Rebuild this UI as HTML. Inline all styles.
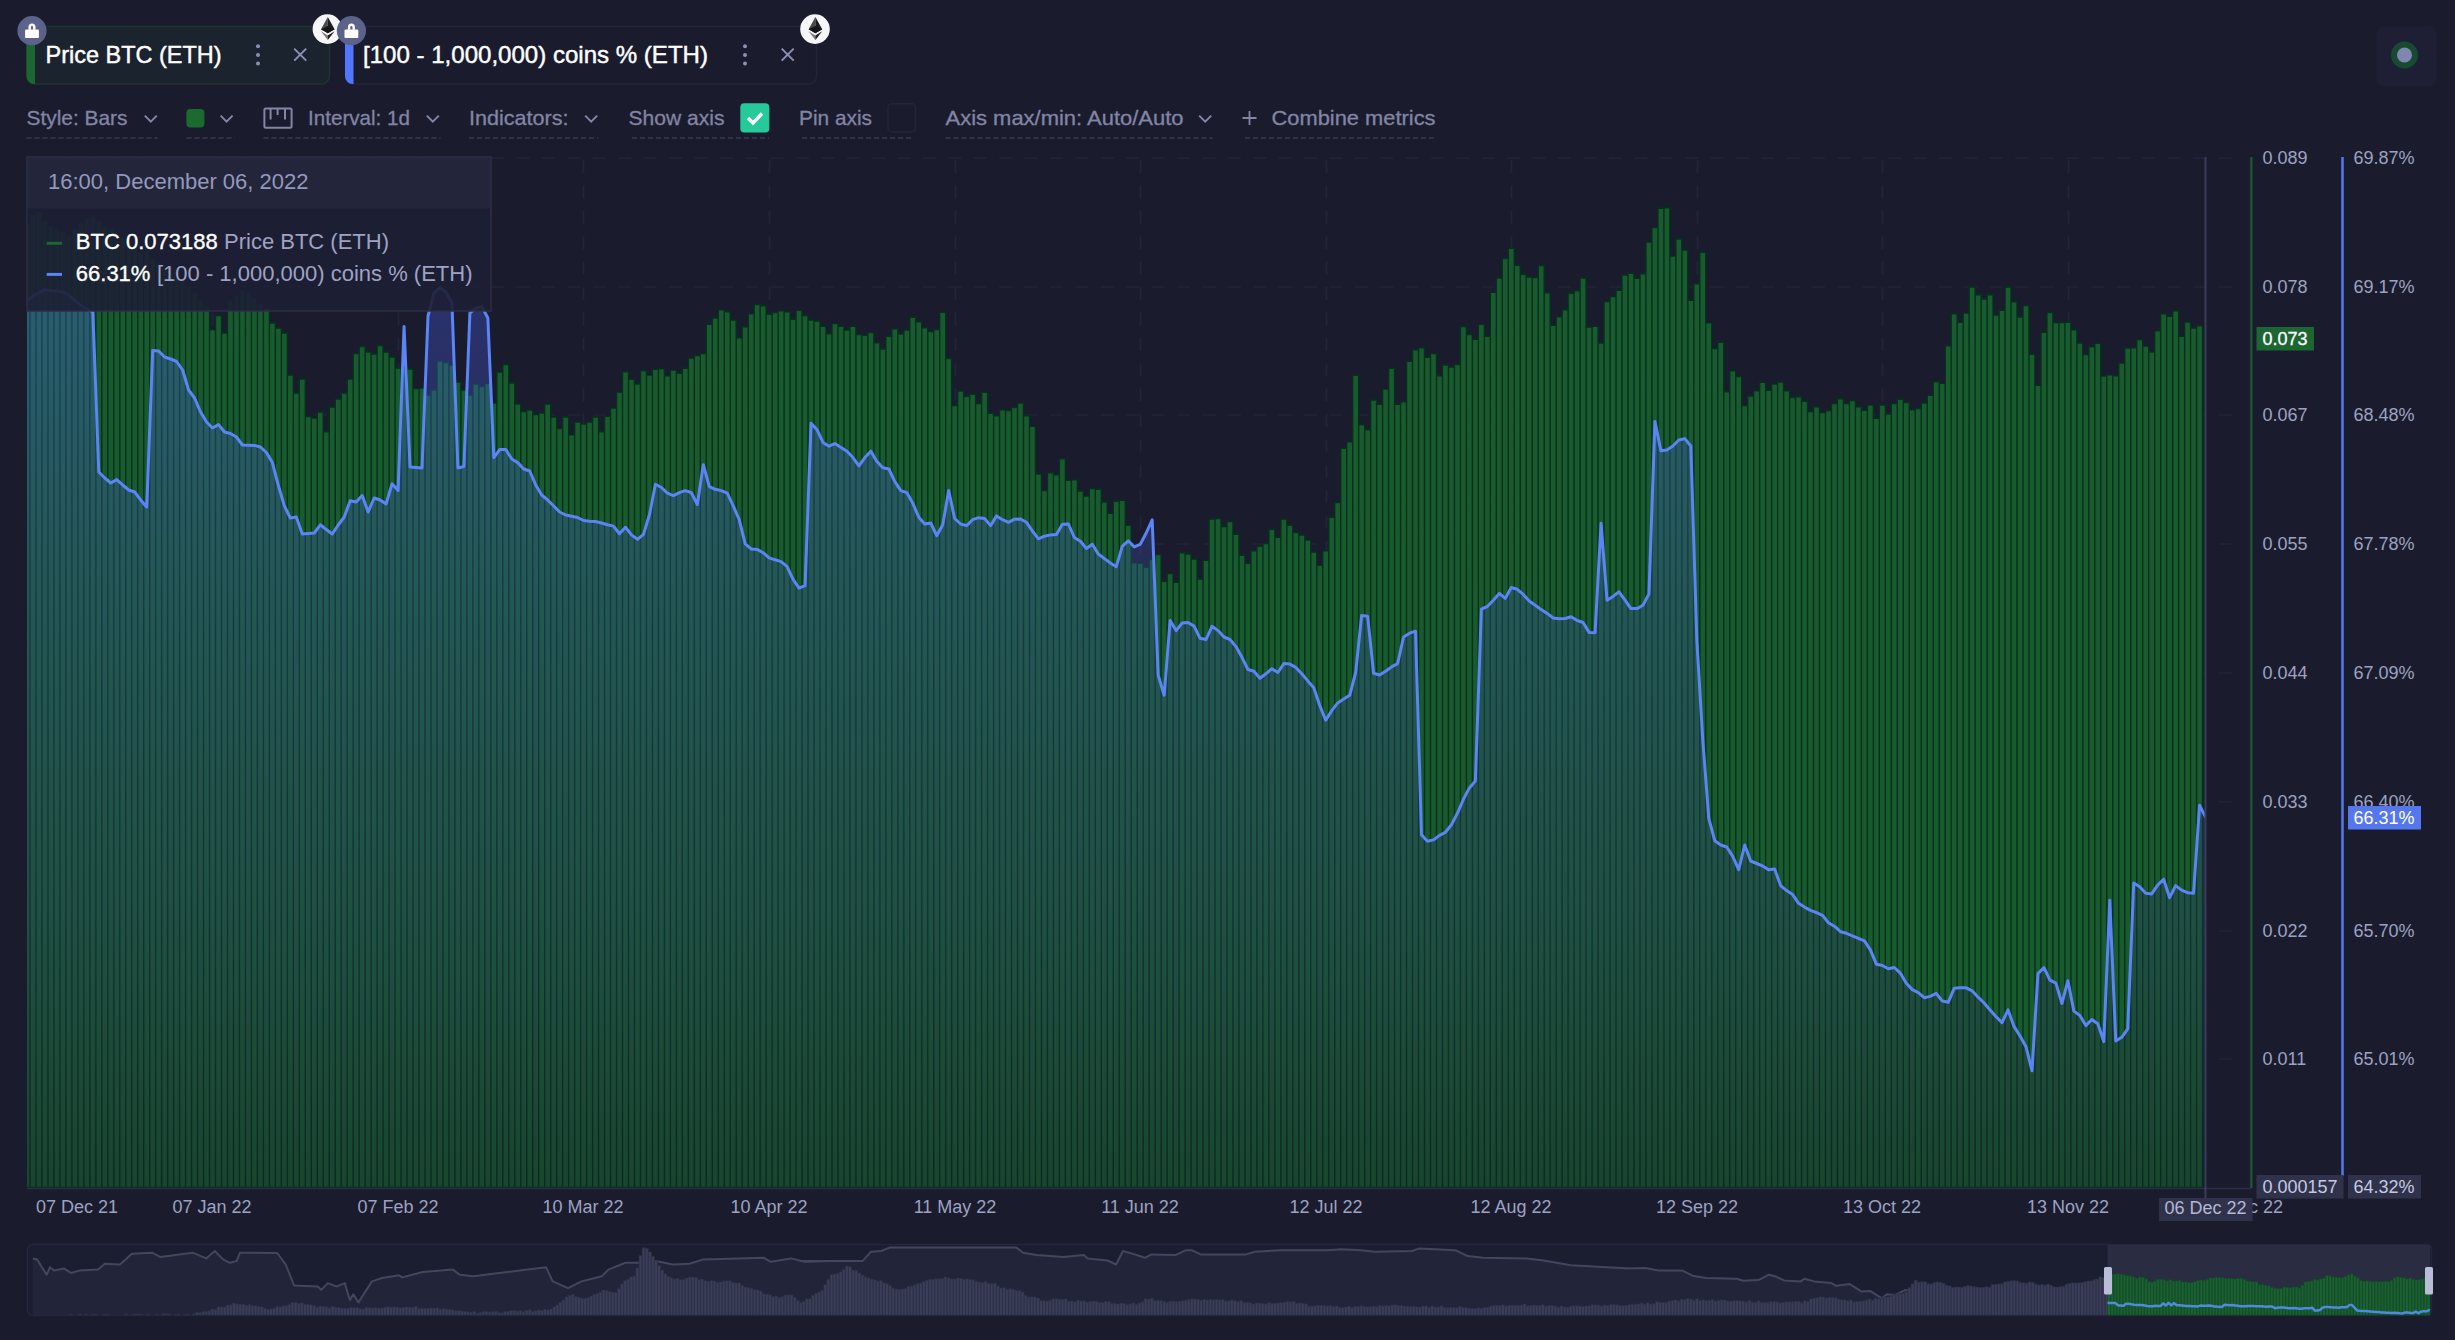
<!DOCTYPE html><html><head><meta charset="utf-8"><title>Chart</title>
<style>html,body{margin:0;padding:0;background:#1a1c2e;}body{width:2455px;height:1340px;overflow:hidden;}svg{display:block;font-family:"Liberation Sans",sans-serif;}</style></head><body>
<svg width="2455" height="1340" viewBox="0 0 2455 1340">
<defs>
<linearGradient id="ag" gradientUnits="userSpaceOnUse" x1="0" y1="287" x2="0" y2="1187"><stop offset="0" stop-color="rgb(80,100,255)" stop-opacity="0.30"/><stop offset="0.35" stop-color="rgb(58,80,160)" stop-opacity="0.32"/><stop offset="0.69" stop-color="rgb(44,58,105)" stop-opacity="0.33"/><stop offset="1" stop-color="rgb(26,28,46)" stop-opacity="0.34"/></linearGradient>
<clipPath id="cc"><rect x="27" y="150" width="2178.5" height="1038"/></clipPath>
</defs>
<rect width="2455" height="1340" fill="#1a1c2e"/>
<line x1="27" y1="158" x2="2240" y2="158" stroke="#22253a" stroke-width="1.6" stroke-dasharray="13 12.4" stroke-dashoffset="-7"/>
<line x1="27" y1="287" x2="2240" y2="287" stroke="#22253a" stroke-width="1.6" stroke-dasharray="13 12.4" stroke-dashoffset="-7"/>
<line x1="27" y1="415" x2="2240" y2="415" stroke="#22253a" stroke-width="1.6" stroke-dasharray="13 12.4" stroke-dashoffset="-7"/>
<line x1="27" y1="544" x2="2240" y2="544" stroke="#22253a" stroke-width="1.6" stroke-dasharray="13 12.4" stroke-dashoffset="-7"/>
<line x1="27" y1="673" x2="2240" y2="673" stroke="#22253a" stroke-width="1.6" stroke-dasharray="13 12.4" stroke-dashoffset="-7"/>
<line x1="27" y1="802" x2="2240" y2="802" stroke="#22253a" stroke-width="1.6" stroke-dasharray="13 12.4" stroke-dashoffset="-7"/>
<line x1="27" y1="931" x2="2240" y2="931" stroke="#22253a" stroke-width="1.6" stroke-dasharray="13 12.4" stroke-dashoffset="-7"/>
<line x1="27" y1="1059" x2="2240" y2="1059" stroke="#22253a" stroke-width="1.6" stroke-dasharray="13 12.4" stroke-dashoffset="-7"/>
<line x1="212.5" y1="157" x2="212.5" y2="1187" stroke="#22253a" stroke-width="1.6" stroke-dasharray="13 12.4" stroke-dashoffset="-3"/>
<line x1="398.5" y1="157" x2="398.5" y2="1187" stroke="#22253a" stroke-width="1.6" stroke-dasharray="13 12.4" stroke-dashoffset="-3"/>
<line x1="583.5" y1="157" x2="583.5" y2="1187" stroke="#22253a" stroke-width="1.6" stroke-dasharray="13 12.4" stroke-dashoffset="-3"/>
<line x1="769.5" y1="157" x2="769.5" y2="1187" stroke="#22253a" stroke-width="1.6" stroke-dasharray="13 12.4" stroke-dashoffset="-3"/>
<line x1="955.5" y1="157" x2="955.5" y2="1187" stroke="#22253a" stroke-width="1.6" stroke-dasharray="13 12.4" stroke-dashoffset="-3"/>
<line x1="1140.5" y1="157" x2="1140.5" y2="1187" stroke="#22253a" stroke-width="1.6" stroke-dasharray="13 12.4" stroke-dashoffset="-3"/>
<line x1="1326.5" y1="157" x2="1326.5" y2="1187" stroke="#22253a" stroke-width="1.6" stroke-dasharray="13 12.4" stroke-dashoffset="-3"/>
<line x1="1511.5" y1="157" x2="1511.5" y2="1187" stroke="#22253a" stroke-width="1.6" stroke-dasharray="13 12.4" stroke-dashoffset="-3"/>
<line x1="1697.5" y1="157" x2="1697.5" y2="1187" stroke="#22253a" stroke-width="1.6" stroke-dasharray="13 12.4" stroke-dashoffset="-3"/>
<line x1="1882.5" y1="157" x2="1882.5" y2="1187" stroke="#22253a" stroke-width="1.6" stroke-dasharray="13 12.4" stroke-dashoffset="-3"/>
<line x1="2068.5" y1="157" x2="2068.5" y2="1187" stroke="#22253a" stroke-width="1.6" stroke-dasharray="13 12.4" stroke-dashoffset="-3"/>
<g clip-path="url(#cc)">
<path d="M24.01 1187.5V222.0H29.99V1187.5ZM29.99 1187.5V214.0H35.98V1187.5ZM35.98 1187.5V212.0H41.96V1187.5ZM41.96 1187.5V220.0H47.95V1187.5ZM47.95 1187.5V226.0H53.93V1187.5ZM53.93 1187.5V228.0H59.92V1187.5ZM59.92 1187.5V232.0H65.90V1187.5ZM65.90 1187.5V236.0H71.89V1187.5ZM71.89 1187.5V228.0H77.87V1187.5ZM77.87 1187.5V222.0H83.86V1187.5ZM83.86 1187.5V218.0H89.84V1187.5ZM89.84 1187.5V216.0H95.83V1187.5ZM95.83 1187.5V220.0H101.81V1187.5ZM101.81 1187.5V226.0H107.80V1187.5ZM107.80 1187.5V228.0H113.78V1187.5ZM113.78 1187.5V232.0H119.77V1187.5ZM119.77 1187.5V238.0H125.75V1187.5ZM125.75 1187.5V240.0H131.74V1187.5ZM131.74 1187.5V246.0H137.72V1187.5ZM137.72 1187.5V252.0H143.71V1187.5ZM143.71 1187.5V250.0H149.69V1187.5ZM149.69 1187.5V258.0H155.68V1187.5ZM155.68 1187.5V262.0H161.66V1187.5ZM161.66 1187.5V268.0H167.65V1187.5ZM167.65 1187.5V266.0H173.63V1187.5ZM173.63 1187.5V272.0H179.62V1187.5ZM179.62 1187.5V280.0H185.60V1187.5ZM185.60 1187.5V286.0H191.59V1187.5ZM191.59 1187.5V292.0H197.57V1187.5ZM197.57 1187.5V300.0H203.56V1187.5ZM203.56 1187.5V306.0H209.54V1187.5ZM209.54 1187.5V329.5H215.53V1187.5ZM215.53 1187.5V315.5H221.51V1187.5ZM221.51 1187.5V333.0H227.50V1187.5ZM227.50 1187.5V300.0H233.48V1187.5ZM233.48 1187.5V295.0H239.47V1187.5ZM239.47 1187.5V290.0H245.45V1187.5ZM245.45 1187.5V292.0H251.44V1187.5ZM251.44 1187.5V298.0H257.42V1187.5ZM257.42 1187.5V303.0H263.41V1187.5ZM263.41 1187.5V308.0H269.39V1187.5ZM269.39 1187.5V323.0H275.38V1187.5ZM275.38 1187.5V328.0H281.36V1187.5ZM281.36 1187.5V333.0H287.35V1187.5ZM287.35 1187.5V375.0H293.33V1187.5ZM293.33 1187.5V393.0H299.32V1187.5ZM299.32 1187.5V379.0H305.30V1187.5ZM305.30 1187.5V416.5H311.29V1187.5ZM311.29 1187.5V418.0H317.27V1187.5ZM317.27 1187.5V412.0H323.26V1187.5ZM323.26 1187.5V431.7H329.24V1187.5ZM329.24 1187.5V407.0H335.23V1187.5ZM335.23 1187.5V399.0H341.21V1187.5ZM341.21 1187.5V393.0H347.20V1187.5ZM347.20 1187.5V379.0H353.18V1187.5ZM353.18 1187.5V353.6H359.17V1187.5ZM359.17 1187.5V346.5H365.15V1187.5ZM365.15 1187.5V352.0H371.14V1187.5ZM371.14 1187.5V354.0H377.12V1187.5ZM377.12 1187.5V345.5H383.11V1187.5ZM383.11 1187.5V352.0H389.09V1187.5ZM389.09 1187.5V357.0H395.08V1187.5ZM395.08 1187.5V368.0H401.06V1187.5ZM401.06 1187.5V369.0H407.05V1187.5ZM407.05 1187.5V369.0H413.03V1187.5ZM413.03 1187.5V388.6H419.02V1187.5ZM419.02 1187.5V388.0H425.00V1187.5ZM425.00 1187.5V395.0H430.99V1187.5ZM430.99 1187.5V390.0H436.97V1187.5ZM436.97 1187.5V361.0H442.96V1187.5ZM442.96 1187.5V362.5H448.94V1187.5ZM448.94 1187.5V365.0H454.93V1187.5ZM454.93 1187.5V382.0H460.91V1187.5ZM460.91 1187.5V390.0H466.90V1187.5ZM466.90 1187.5V395.0H472.88V1187.5ZM472.88 1187.5V384.0H478.87V1187.5ZM478.87 1187.5V386.5H484.85V1187.5ZM484.85 1187.5V383.5H490.84V1187.5ZM490.84 1187.5V403.0H496.82V1187.5ZM496.82 1187.5V372.0H502.81V1187.5ZM502.81 1187.5V364.5H508.79V1187.5ZM508.79 1187.5V383.0H514.78V1187.5ZM514.78 1187.5V404.0H520.76V1187.5ZM520.76 1187.5V411.5H526.75V1187.5ZM526.75 1187.5V410.0H532.73V1187.5ZM532.73 1187.5V414.5H538.72V1187.5ZM538.72 1187.5V413.0H544.70V1187.5ZM544.70 1187.5V404.0H550.69V1187.5ZM550.69 1187.5V417.0H556.67V1187.5ZM556.67 1187.5V428.5H562.66V1187.5ZM562.66 1187.5V417.0H568.64V1187.5ZM568.64 1187.5V434.7H574.63V1187.5ZM574.63 1187.5V422.0H580.61V1187.5ZM580.61 1187.5V424.0H586.60V1187.5ZM586.60 1187.5V422.0H592.58V1187.5ZM592.58 1187.5V417.0H598.57V1187.5ZM598.57 1187.5V431.7H604.55V1187.5ZM604.55 1187.5V416.2H610.54V1187.5ZM610.54 1187.5V408.1H616.52V1187.5ZM616.52 1187.5V392.1H622.51V1187.5ZM622.51 1187.5V371.8H628.49V1187.5ZM628.49 1187.5V379.4H634.48V1187.5ZM634.48 1187.5V384.0H640.46V1187.5ZM640.46 1187.5V370.8H646.45V1187.5ZM646.45 1187.5V375.1H652.43V1187.5ZM652.43 1187.5V369.3H658.42V1187.5ZM658.42 1187.5V368.8H664.40V1187.5ZM664.40 1187.5V375.9H670.39V1187.5ZM670.39 1187.5V370.1H676.37V1187.5ZM676.37 1187.5V373.4H682.36V1187.5ZM682.36 1187.5V368.3H688.34V1187.5ZM688.34 1187.5V358.1H694.33V1187.5ZM694.33 1187.5V355.6H700.31V1187.5ZM700.31 1187.5V353.6H706.30V1187.5ZM706.30 1187.5V324.4H712.28V1187.5ZM712.28 1187.5V318.1H718.27V1187.5ZM718.27 1187.5V309.9H724.25V1187.5ZM724.25 1187.5V311.7H730.24V1187.5ZM730.24 1187.5V320.1H736.22V1187.5ZM736.22 1187.5V337.8H742.21V1187.5ZM742.21 1187.5V326.9H748.19V1187.5ZM748.19 1187.5V313.7H754.18V1187.5ZM754.18 1187.5V304.6H760.16V1187.5ZM760.16 1187.5V305.9H766.15V1187.5ZM766.15 1187.5V314.2H772.13V1187.5ZM772.13 1187.5V312.5H778.12V1187.5ZM778.12 1187.5V310.9H784.10V1187.5ZM784.10 1187.5V311.7H790.09V1187.5ZM790.09 1187.5V319.3H796.07V1187.5ZM796.07 1187.5V310.4H802.06V1187.5ZM802.06 1187.5V315.5H808.04V1187.5ZM808.04 1187.5V320.1H814.03V1187.5ZM814.03 1187.5V321.1H820.01V1187.5ZM820.01 1187.5V326.4H826.00V1187.5ZM826.00 1187.5V333.8H831.98V1187.5ZM831.98 1187.5V323.6H837.97V1187.5ZM837.97 1187.5V326.4H843.95V1187.5ZM843.95 1187.5V330.0H849.94V1187.5ZM849.94 1187.5V326.4H855.92V1187.5ZM855.92 1187.5V334.5H861.91V1187.5ZM861.91 1187.5V335.3H867.89V1187.5ZM867.89 1187.5V332.5H873.88V1187.5ZM873.88 1187.5V342.9H879.86V1187.5ZM879.86 1187.5V349.0H885.85V1187.5ZM885.85 1187.5V336.3H891.83V1187.5ZM891.83 1187.5V328.7H897.82V1187.5ZM897.82 1187.5V334.0H903.80V1187.5ZM903.80 1187.5V330.0H909.79V1187.5ZM909.79 1187.5V317.3H915.77V1187.5ZM915.77 1187.5V321.9H921.76V1187.5ZM921.76 1187.5V327.7H927.74V1187.5ZM927.74 1187.5V331.5H933.73V1187.5ZM933.73 1187.5V329.5H939.71V1187.5ZM939.71 1187.5V312.2H945.70V1187.5ZM945.70 1187.5V358.6H951.68V1187.5ZM951.68 1187.5V405.6H957.67V1187.5ZM957.67 1187.5V391.1H963.65V1187.5ZM963.65 1187.5V396.2H969.64V1187.5ZM969.64 1187.5V394.2H975.62V1187.5ZM975.62 1187.5V403.5H981.61V1187.5ZM981.61 1187.5V392.4H987.59V1187.5ZM987.59 1187.5V413.2H993.58V1187.5ZM993.58 1187.5V415.7H999.56V1187.5ZM999.56 1187.5V409.9H1005.55V1187.5ZM1005.55 1187.5V410.6H1011.53V1187.5ZM1011.53 1187.5V407.6H1017.52V1187.5ZM1017.52 1187.5V403.0H1023.50V1187.5ZM1023.50 1187.5V415.7H1029.49V1187.5ZM1029.49 1187.5V426.4H1035.47V1187.5ZM1035.47 1187.5V474.1H1041.46V1187.5ZM1041.46 1187.5V490.6H1047.44V1187.5ZM1047.44 1187.5V472.8H1053.43V1187.5ZM1053.43 1187.5V474.8H1059.41V1187.5ZM1059.41 1187.5V458.8H1065.40V1187.5ZM1065.40 1187.5V480.4H1071.38V1187.5ZM1071.38 1187.5V479.9H1077.37V1187.5ZM1077.37 1187.5V491.1H1083.35V1187.5ZM1083.35 1187.5V496.1H1089.34V1187.5ZM1089.34 1187.5V488.5H1095.32V1187.5ZM1095.32 1187.5V489.3H1101.31V1187.5ZM1101.31 1187.5V502.0H1107.29V1187.5ZM1107.29 1187.5V513.4H1113.28V1187.5ZM1113.28 1187.5V501.2H1119.26V1187.5ZM1119.26 1187.5V500.2H1125.25V1187.5ZM1125.25 1187.5V525.3H1131.23V1187.5ZM1131.23 1187.5V562.9H1137.22V1187.5ZM1137.22 1187.5V563.4H1143.20V1187.5ZM1143.20 1187.5V567.2H1149.19V1187.5ZM1149.19 1187.5V559.6H1155.17V1187.5ZM1155.17 1187.5V554.5H1161.16V1187.5ZM1161.16 1187.5V581.2H1167.14V1187.5ZM1167.14 1187.5V573.6H1173.13V1187.5ZM1173.13 1187.5V582.4H1179.11V1187.5ZM1179.11 1187.5V552.8H1185.10V1187.5ZM1185.10 1187.5V554.0H1191.08V1187.5ZM1191.08 1187.5V559.1H1197.07V1187.5ZM1197.07 1187.5V579.1H1203.05V1187.5ZM1203.05 1187.5V560.4H1209.04V1187.5ZM1209.04 1187.5V519.0H1215.02V1187.5ZM1215.02 1187.5V518.5H1221.01V1187.5ZM1221.01 1187.5V526.6H1226.99V1187.5ZM1226.99 1187.5V521.6H1232.98V1187.5ZM1232.98 1187.5V534.2H1238.96V1187.5ZM1238.96 1187.5V555.3H1244.95V1187.5ZM1244.95 1187.5V563.4H1250.93V1187.5ZM1250.93 1187.5V550.7H1256.92V1187.5ZM1256.92 1187.5V546.2H1262.90V1187.5ZM1262.90 1187.5V543.6H1268.89V1187.5ZM1268.89 1187.5V529.2H1274.87V1187.5ZM1274.87 1187.5V537.3H1280.86V1187.5ZM1280.86 1187.5V519.0H1286.84V1187.5ZM1286.84 1187.5V525.4H1292.83V1187.5ZM1292.83 1187.5V532.5H1298.81V1187.5ZM1298.81 1187.5V535.0H1304.80V1187.5ZM1304.80 1187.5V540.1H1310.78V1187.5ZM1310.78 1187.5V552.0H1316.77V1187.5ZM1316.77 1187.5V565.4H1322.75V1187.5ZM1322.75 1187.5V550.7H1328.74V1187.5ZM1328.74 1187.5V517.2H1334.72V1187.5ZM1334.72 1187.5V502.5H1340.71V1187.5ZM1340.71 1187.5V448.2H1346.69V1187.5ZM1346.69 1187.5V441.9H1352.68V1187.5ZM1352.68 1187.5V375.2H1358.66V1187.5ZM1358.66 1187.5V424.7H1364.65V1187.5ZM1364.65 1187.5V429.7H1370.63V1187.5ZM1370.63 1187.5V400.0H1376.62V1187.5ZM1376.62 1187.5V404.4H1382.60V1187.5ZM1382.60 1187.5V389.1H1388.59V1187.5ZM1388.59 1187.5V368.3H1394.57V1187.5ZM1394.57 1187.5V404.4H1400.56V1187.5ZM1400.56 1187.5V401.8H1406.54V1187.5ZM1406.54 1187.5V361.2H1412.53V1187.5ZM1412.53 1187.5V349.8H1418.51V1187.5ZM1418.51 1187.5V347.8H1424.50V1187.5ZM1424.50 1187.5V357.4H1430.48V1187.5ZM1430.48 1187.5V353.6H1436.47V1187.5ZM1436.47 1187.5V375.7H1442.45V1187.5ZM1442.45 1187.5V365.0H1448.44V1187.5ZM1448.44 1187.5V367.1H1454.42V1187.5ZM1454.42 1187.5V364.5H1460.41V1187.5ZM1460.41 1187.5V326.5H1466.39V1187.5ZM1466.39 1187.5V334.6H1472.38V1187.5ZM1472.38 1187.5V339.2H1478.36V1187.5ZM1478.36 1187.5V324.4H1484.35V1187.5ZM1484.35 1187.5V336.4H1490.33V1187.5ZM1490.33 1187.5V292.2H1496.32V1187.5ZM1496.32 1187.5V278.0H1502.30V1187.5ZM1502.30 1187.5V258.5H1508.29V1187.5ZM1508.29 1187.5V248.3H1514.27V1187.5ZM1514.27 1187.5V265.3H1520.26V1187.5ZM1520.26 1187.5V274.2H1526.24V1187.5ZM1526.24 1187.5V277.0H1532.23V1187.5ZM1532.23 1187.5V277.5H1538.21V1187.5ZM1538.21 1187.5V265.6H1544.20V1187.5ZM1544.20 1187.5V292.7H1550.18V1187.5ZM1550.18 1187.5V325.2H1556.17V1187.5ZM1556.17 1187.5V316.8H1562.15V1187.5ZM1562.15 1187.5V309.7H1568.14V1187.5ZM1568.14 1187.5V293.2H1574.12V1187.5ZM1574.12 1187.5V290.7H1580.11V1187.5ZM1580.11 1187.5V278.0H1586.09V1187.5ZM1586.09 1187.5V327.0H1592.08V1187.5ZM1592.08 1187.5V326.2H1598.06V1187.5ZM1598.06 1187.5V343.0H1604.05V1187.5ZM1604.05 1187.5V301.6H1610.03V1187.5ZM1610.03 1187.5V296.5H1616.02V1187.5ZM1616.02 1187.5V290.2H1622.00V1187.5ZM1622.00 1187.5V275.0H1627.99V1187.5ZM1627.99 1187.5V273.2H1633.97V1187.5ZM1633.97 1187.5V278.3H1639.96V1187.5ZM1639.96 1187.5V273.7H1645.94V1187.5ZM1645.94 1187.5V242.0H1651.93V1187.5ZM1651.93 1187.5V227.5H1657.91V1187.5ZM1657.91 1187.5V208.3H1663.90V1187.5ZM1663.90 1187.5V207.8H1669.88V1187.5ZM1669.88 1187.5V256.0H1675.87V1187.5ZM1675.87 1187.5V239.0H1681.85V1187.5ZM1681.85 1187.5V250.1H1687.84V1187.5ZM1687.84 1187.5V300.4H1693.82V1187.5ZM1693.82 1187.5V283.9H1699.81V1187.5ZM1699.81 1187.5V252.2H1705.79V1187.5ZM1705.79 1187.5V322.7H1711.78V1187.5ZM1711.78 1187.5V348.5H1717.76V1187.5ZM1717.76 1187.5V342.2H1723.75V1187.5ZM1723.75 1187.5V391.7H1729.73V1187.5ZM1729.73 1187.5V370.9H1735.72V1187.5ZM1735.72 1187.5V376.5H1741.70V1187.5ZM1741.70 1187.5V405.6H1747.69V1187.5ZM1747.69 1187.5V396.0H1753.67V1187.5ZM1753.67 1187.5V390.9H1759.66V1187.5ZM1759.66 1187.5V382.3H1765.64V1187.5ZM1765.64 1187.5V390.4H1771.63V1187.5ZM1771.63 1187.5V384.1H1777.61V1187.5ZM1777.61 1187.5V382.0H1783.60V1187.5ZM1783.60 1187.5V390.9H1789.58V1187.5ZM1789.58 1187.5V397.5H1795.57V1187.5ZM1795.57 1187.5V396.7H1801.55V1187.5ZM1801.55 1187.5V401.3H1807.54V1187.5ZM1807.54 1187.5V411.5H1813.52V1187.5ZM1813.52 1187.5V406.9H1819.51V1187.5ZM1819.51 1187.5V412.5H1825.49V1187.5ZM1825.49 1187.5V410.7H1831.48V1187.5ZM1831.48 1187.5V403.6H1837.46V1187.5ZM1837.46 1187.5V398.8H1843.45V1187.5ZM1843.45 1187.5V403.6H1849.43V1187.5ZM1849.43 1187.5V400.6H1855.42V1187.5ZM1855.42 1187.5V406.9H1861.40V1187.5ZM1861.40 1187.5V410.2H1867.39V1187.5ZM1867.39 1187.5V405.1H1873.37V1187.5ZM1873.37 1187.5V418.3H1879.36V1187.5ZM1879.36 1187.5V405.1H1885.34V1187.5ZM1885.34 1187.5V414.0H1891.33V1187.5ZM1891.33 1187.5V403.6H1897.31V1187.5ZM1897.31 1187.5V399.3H1903.30V1187.5ZM1903.30 1187.5V402.6H1909.28V1187.5ZM1909.28 1187.5V409.8H1915.27V1187.5ZM1915.27 1187.5V408.5H1921.25V1187.5ZM1921.25 1187.5V403.0H1927.24V1187.5ZM1927.24 1187.5V395.4H1933.22V1187.5ZM1933.22 1187.5V381.7H1939.21V1187.5ZM1939.21 1187.5V383.4H1945.19V1187.5ZM1945.19 1187.5V345.8H1951.18V1187.5ZM1951.18 1187.5V313.8H1957.16V1187.5ZM1957.16 1187.5V322.2H1963.15V1187.5ZM1963.15 1187.5V313.1H1969.13V1187.5ZM1969.13 1187.5V287.0H1975.12V1187.5ZM1975.12 1187.5V294.8H1981.10V1187.5ZM1981.10 1187.5V299.0H1987.09V1187.5ZM1987.09 1187.5V294.8H1993.07V1187.5ZM1993.07 1187.5V315.1H1999.06V1187.5ZM1999.06 1187.5V310.2H2005.04V1187.5ZM2005.04 1187.5V287.0H2011.03V1187.5ZM2011.03 1187.5V301.7H2017.01V1187.5ZM2017.01 1187.5V317.0H2023.00V1187.5ZM2023.00 1187.5V305.5H2028.98V1187.5ZM2028.98 1187.5V354.2H2034.97V1187.5ZM2034.97 1187.5V385.2H2040.95V1187.5ZM2040.95 1187.5V332.4H2046.94V1187.5ZM2046.94 1187.5V312.5H2052.92V1187.5ZM2052.92 1187.5V322.5H2058.91V1187.5ZM2058.91 1187.5V322.5H2064.89V1187.5ZM2064.89 1187.5V322.2H2070.88V1187.5ZM2070.88 1187.5V329.7H2076.86V1187.5ZM2076.86 1187.5V343.1H2082.85V1187.5ZM2082.85 1187.5V354.6H2088.83V1187.5ZM2088.83 1187.5V346.8H2094.82V1187.5ZM2094.82 1187.5V343.4H2100.80V1187.5ZM2100.80 1187.5V376.1H2106.79V1187.5ZM2106.79 1187.5V374.9H2112.77V1187.5ZM2112.77 1187.5V375.8H2118.76V1187.5ZM2118.76 1187.5V363.0H2124.74V1187.5ZM2124.74 1187.5V348.1H2130.73V1187.5ZM2130.73 1187.5V347.7H2136.71V1187.5ZM2136.71 1187.5V339.6H2142.70V1187.5ZM2142.70 1187.5V346.0H2148.68V1187.5ZM2148.68 1187.5V352.0H2154.67V1187.5ZM2154.67 1187.5V330.7H2160.65V1187.5ZM2160.65 1187.5V313.8H2166.64V1187.5ZM2166.64 1187.5V316.4H2172.62V1187.5ZM2172.62 1187.5V310.8H2178.61V1187.5ZM2178.61 1187.5V336.2H2184.59V1187.5ZM2184.59 1187.5V322.0H2190.58V1187.5ZM2190.58 1187.5V328.1H2196.56V1187.5ZM2196.56 1187.5V325.9H2202.55V1187.5Z" fill="#195b2e" stroke="#05301c" stroke-width="1.4"/>
<path d="M27.00 300.5 L32.98 296.0 L38.97 292.5 L44.95 290.0 L50.94 290.5 L56.92 291.0 L62.91 291.7 L68.90 295.0 L74.88 300.5 L80.87 305.5 L86.85 309.0 L92.84 312.0 L98.82 472.0 L104.81 478.0 L110.79 483.0 L116.78 479.6 L122.76 485.0 L128.75 490.0 L134.73 492.0 L140.72 500.0 L146.70 507.0 L152.69 350.5 L158.67 351.0 L164.66 357.0 L170.64 359.0 L176.62 361.5 L182.61 370.0 L188.59 390.0 L194.58 398.0 L200.56 412.0 L206.55 422.0 L212.53 428.0 L218.52 424.6 L224.51 432.0 L230.49 433.5 L236.48 437.0 L242.46 445.0 L248.45 445.2 L254.43 445.4 L260.42 447.0 L266.40 452.5 L272.38 462.6 L278.37 485.5 L284.36 505.8 L290.34 518.0 L296.32 517.0 L302.31 534.0 L308.30 533.5 L314.28 533.0 L320.27 524.8 L326.25 529.5 L332.24 534.0 L338.22 525.0 L344.21 517.0 L350.19 500.7 L356.18 502.0 L362.16 495.6 L368.15 512.0 L374.13 498.0 L380.12 500.0 L386.10 504.0 L392.09 483.7 L398.07 490.5 L404.06 326.4 L410.04 467.0 L416.03 467.5 L422.01 468.0 L428.00 316.0 L433.98 293.0 L439.97 287.6 L445.95 292.0 L451.94 303.0 L457.92 468.0 L463.91 466.5 L469.89 313.0 L475.88 308.0 L481.86 306.6 L487.85 318.0 L493.83 457.6 L499.81 449.5 L505.80 449.5 L511.79 459.0 L517.77 462.6 L523.76 469.0 L529.74 471.0 L535.73 485.0 L541.71 495.0 L547.70 500.0 L553.68 506.0 L559.67 512.0 L565.65 515.0 L571.63 516.3 L577.62 517.5 L583.61 520.5 L589.59 521.2 L595.58 521.5 L601.56 523.0 L607.55 524.8 L613.53 526.1 L619.51 533.7 L625.50 527.3 L631.49 534.9 L637.47 539.3 L643.46 534.4 L649.44 514.7 L655.43 484.2 L661.41 487.5 L667.39 493.1 L673.38 495.6 L679.37 492.6 L685.35 490.6 L691.34 492.6 L697.32 504.5 L703.31 464.7 L709.29 486.7 L715.28 489.3 L721.26 490.6 L727.25 493.1 L733.23 505.8 L739.22 519.7 L745.20 543.8 L751.19 548.9 L757.17 549.4 L763.16 552.7 L769.14 557.8 L775.12 559.8 L781.11 561.6 L787.10 566.7 L793.08 579.3 L799.07 588.2 L805.05 585.7 L811.04 423.3 L817.02 429.7 L823.00 442.4 L828.99 446.2 L834.98 443.6 L840.96 447.4 L846.95 451.2 L852.93 457.6 L858.92 465.9 L864.90 457.6 L870.88 451.2 L876.87 461.4 L882.86 467.7 L888.84 469.0 L894.83 481.7 L900.81 490.6 L906.80 492.6 L912.78 503.2 L918.77 517.2 L924.75 524.0 L930.74 523.0 L936.72 535.7 L942.71 524.8 L948.69 490.6 L954.68 518.5 L960.66 524.0 L966.65 525.6 L972.63 519.7 L978.62 517.7 L984.60 518.5 L990.59 525.6 L996.57 515.9 L1002.56 519.7 L1008.54 522.3 L1014.53 519.2 L1020.51 519.0 L1026.49 522.3 L1032.48 531.1 L1038.47 538.8 L1044.45 536.2 L1050.43 534.9 L1056.42 534.4 L1062.40 524.3 L1068.39 524.0 L1074.38 537.5 L1080.36 541.3 L1086.35 548.4 L1092.33 544.3 L1098.32 554.0 L1104.30 558.5 L1110.29 562.9 L1116.27 566.7 L1122.26 546.4 L1128.24 540.8 L1134.23 546.9 L1140.21 544.4 L1146.20 533.0 L1152.18 519.8 L1158.16 675.0 L1164.15 695.3 L1170.13 620.5 L1176.12 630.6 L1182.11 623.0 L1188.09 622.5 L1194.08 626.1 L1200.06 638.3 L1206.05 639.5 L1212.03 626.3 L1218.02 630.6 L1224.00 637.0 L1229.99 639.5 L1235.97 646.6 L1241.96 657.3 L1247.94 669.5 L1253.92 671.2 L1259.91 678.3 L1265.89 673.8 L1271.88 668.7 L1277.87 672.5 L1283.85 663.6 L1289.84 664.1 L1295.82 667.4 L1301.81 673.8 L1307.79 680.9 L1313.78 687.7 L1319.76 705.5 L1325.75 720.2 L1331.73 710.6 L1337.72 702.9 L1343.70 699.1 L1349.69 695.3 L1355.67 672.5 L1361.65 615.4 L1367.64 616.2 L1373.62 673.3 L1379.61 675.0 L1385.60 671.2 L1391.58 666.9 L1397.57 663.6 L1403.55 637.0 L1409.54 633.2 L1415.52 631.2 L1421.51 834.9 L1427.49 841.2 L1433.48 839.9 L1439.46 835.4 L1445.45 832.3 L1451.43 824.7 L1457.41 813.3 L1463.40 799.3 L1469.38 787.9 L1475.37 781.1 L1481.36 609.1 L1487.34 606.5 L1493.33 600.2 L1499.31 593.4 L1505.30 598.4 L1511.28 587.5 L1517.27 589.3 L1523.25 594.4 L1529.24 601.0 L1535.22 605.3 L1541.21 609.6 L1547.19 613.4 L1553.18 618.0 L1559.16 618.7 L1565.14 618.5 L1571.13 616.7 L1577.12 620.5 L1583.10 622.5 L1589.09 632.4 L1595.07 632.7 L1601.06 523.3 L1607.04 600.2 L1613.03 596.4 L1619.01 591.8 L1625.00 600.2 L1630.98 608.6 L1636.97 608.6 L1642.95 605.3 L1648.94 593.9 L1654.92 421.4 L1660.91 450.8 L1666.89 450.0 L1672.88 446.0 L1678.86 440.0 L1684.85 438.6 L1690.83 446.0 L1696.82 640.0 L1702.80 740.0 L1708.79 818.3 L1714.77 840.7 L1720.76 845.0 L1726.74 847.0 L1732.73 856.4 L1738.71 869.6 L1744.70 845.0 L1750.68 861.0 L1756.67 863.5 L1762.65 866.0 L1768.63 869.8 L1774.62 869.1 L1780.61 885.6 L1786.59 890.6 L1792.58 894.4 L1798.56 903.3 L1804.55 907.1 L1810.53 910.4 L1816.52 912.7 L1822.50 915.3 L1828.49 922.9 L1834.47 926.2 L1840.46 931.7 L1846.44 933.3 L1852.43 935.8 L1858.41 938.3 L1864.40 940.9 L1870.38 949.8 L1876.37 964.2 L1882.35 965.5 L1888.34 968.8 L1894.32 967.5 L1900.31 973.1 L1906.29 983.2 L1912.28 989.6 L1918.26 992.6 L1924.25 997.7 L1930.23 996.4 L1936.22 993.4 L1942.20 1001.0 L1948.19 1002.3 L1954.17 988.3 L1960.16 987.8 L1966.14 987.8 L1972.12 990.8 L1978.11 997.2 L1984.10 1003.0 L1990.08 1009.9 L1996.07 1016.7 L2002.05 1022.6 L2008.04 1009.9 L2014.02 1026.4 L2020.01 1036.0 L2025.99 1046.7 L2031.98 1070.8 L2037.96 973.6 L2043.95 967.5 L2049.93 980.2 L2055.91 983.2 L2061.90 1003.5 L2067.89 980.7 L2073.87 1011.1 L2079.86 1015.5 L2085.84 1025.6 L2091.83 1019.5 L2097.81 1023.8 L2103.80 1041.6 L2109.78 900.3 L2115.77 1041.1 L2121.75 1037.3 L2127.74 1028.9 L2133.72 883.0 L2139.70 886.8 L2145.69 893.2 L2151.68 893.9 L2157.66 885.1 L2163.64 879.2 L2169.63 897.7 L2175.62 885.6 L2181.60 890.1 L2187.59 892.7 L2193.57 893.2 L2199.56 805.2 L2205.54 817.1 L2205.54 1187.5 L27.00 1187.5 Z" fill="url(#ag)"/>
<path d="M27.00 300.5 L32.98 296.0 L38.97 292.5 L44.95 290.0 L50.94 290.5 L56.92 291.0 L62.91 291.7 L68.90 295.0 L74.88 300.5 L80.87 305.5 L86.85 309.0 L92.84 312.0 L98.82 472.0 L104.81 478.0 L110.79 483.0 L116.78 479.6 L122.76 485.0 L128.75 490.0 L134.73 492.0 L140.72 500.0 L146.70 507.0 L152.69 350.5 L158.67 351.0 L164.66 357.0 L170.64 359.0 L176.62 361.5 L182.61 370.0 L188.59 390.0 L194.58 398.0 L200.56 412.0 L206.55 422.0 L212.53 428.0 L218.52 424.6 L224.51 432.0 L230.49 433.5 L236.48 437.0 L242.46 445.0 L248.45 445.2 L254.43 445.4 L260.42 447.0 L266.40 452.5 L272.38 462.6 L278.37 485.5 L284.36 505.8 L290.34 518.0 L296.32 517.0 L302.31 534.0 L308.30 533.5 L314.28 533.0 L320.27 524.8 L326.25 529.5 L332.24 534.0 L338.22 525.0 L344.21 517.0 L350.19 500.7 L356.18 502.0 L362.16 495.6 L368.15 512.0 L374.13 498.0 L380.12 500.0 L386.10 504.0 L392.09 483.7 L398.07 490.5 L404.06 326.4 L410.04 467.0 L416.03 467.5 L422.01 468.0 L428.00 316.0 L433.98 293.0 L439.97 287.6 L445.95 292.0 L451.94 303.0 L457.92 468.0 L463.91 466.5 L469.89 313.0 L475.88 308.0 L481.86 306.6 L487.85 318.0 L493.83 457.6 L499.81 449.5 L505.80 449.5 L511.79 459.0 L517.77 462.6 L523.76 469.0 L529.74 471.0 L535.73 485.0 L541.71 495.0 L547.70 500.0 L553.68 506.0 L559.67 512.0 L565.65 515.0 L571.63 516.3 L577.62 517.5 L583.61 520.5 L589.59 521.2 L595.58 521.5 L601.56 523.0 L607.55 524.8 L613.53 526.1 L619.51 533.7 L625.50 527.3 L631.49 534.9 L637.47 539.3 L643.46 534.4 L649.44 514.7 L655.43 484.2 L661.41 487.5 L667.39 493.1 L673.38 495.6 L679.37 492.6 L685.35 490.6 L691.34 492.6 L697.32 504.5 L703.31 464.7 L709.29 486.7 L715.28 489.3 L721.26 490.6 L727.25 493.1 L733.23 505.8 L739.22 519.7 L745.20 543.8 L751.19 548.9 L757.17 549.4 L763.16 552.7 L769.14 557.8 L775.12 559.8 L781.11 561.6 L787.10 566.7 L793.08 579.3 L799.07 588.2 L805.05 585.7 L811.04 423.3 L817.02 429.7 L823.00 442.4 L828.99 446.2 L834.98 443.6 L840.96 447.4 L846.95 451.2 L852.93 457.6 L858.92 465.9 L864.90 457.6 L870.88 451.2 L876.87 461.4 L882.86 467.7 L888.84 469.0 L894.83 481.7 L900.81 490.6 L906.80 492.6 L912.78 503.2 L918.77 517.2 L924.75 524.0 L930.74 523.0 L936.72 535.7 L942.71 524.8 L948.69 490.6 L954.68 518.5 L960.66 524.0 L966.65 525.6 L972.63 519.7 L978.62 517.7 L984.60 518.5 L990.59 525.6 L996.57 515.9 L1002.56 519.7 L1008.54 522.3 L1014.53 519.2 L1020.51 519.0 L1026.49 522.3 L1032.48 531.1 L1038.47 538.8 L1044.45 536.2 L1050.43 534.9 L1056.42 534.4 L1062.40 524.3 L1068.39 524.0 L1074.38 537.5 L1080.36 541.3 L1086.35 548.4 L1092.33 544.3 L1098.32 554.0 L1104.30 558.5 L1110.29 562.9 L1116.27 566.7 L1122.26 546.4 L1128.24 540.8 L1134.23 546.9 L1140.21 544.4 L1146.20 533.0 L1152.18 519.8 L1158.16 675.0 L1164.15 695.3 L1170.13 620.5 L1176.12 630.6 L1182.11 623.0 L1188.09 622.5 L1194.08 626.1 L1200.06 638.3 L1206.05 639.5 L1212.03 626.3 L1218.02 630.6 L1224.00 637.0 L1229.99 639.5 L1235.97 646.6 L1241.96 657.3 L1247.94 669.5 L1253.92 671.2 L1259.91 678.3 L1265.89 673.8 L1271.88 668.7 L1277.87 672.5 L1283.85 663.6 L1289.84 664.1 L1295.82 667.4 L1301.81 673.8 L1307.79 680.9 L1313.78 687.7 L1319.76 705.5 L1325.75 720.2 L1331.73 710.6 L1337.72 702.9 L1343.70 699.1 L1349.69 695.3 L1355.67 672.5 L1361.65 615.4 L1367.64 616.2 L1373.62 673.3 L1379.61 675.0 L1385.60 671.2 L1391.58 666.9 L1397.57 663.6 L1403.55 637.0 L1409.54 633.2 L1415.52 631.2 L1421.51 834.9 L1427.49 841.2 L1433.48 839.9 L1439.46 835.4 L1445.45 832.3 L1451.43 824.7 L1457.41 813.3 L1463.40 799.3 L1469.38 787.9 L1475.37 781.1 L1481.36 609.1 L1487.34 606.5 L1493.33 600.2 L1499.31 593.4 L1505.30 598.4 L1511.28 587.5 L1517.27 589.3 L1523.25 594.4 L1529.24 601.0 L1535.22 605.3 L1541.21 609.6 L1547.19 613.4 L1553.18 618.0 L1559.16 618.7 L1565.14 618.5 L1571.13 616.7 L1577.12 620.5 L1583.10 622.5 L1589.09 632.4 L1595.07 632.7 L1601.06 523.3 L1607.04 600.2 L1613.03 596.4 L1619.01 591.8 L1625.00 600.2 L1630.98 608.6 L1636.97 608.6 L1642.95 605.3 L1648.94 593.9 L1654.92 421.4 L1660.91 450.8 L1666.89 450.0 L1672.88 446.0 L1678.86 440.0 L1684.85 438.6 L1690.83 446.0 L1696.82 640.0 L1702.80 740.0 L1708.79 818.3 L1714.77 840.7 L1720.76 845.0 L1726.74 847.0 L1732.73 856.4 L1738.71 869.6 L1744.70 845.0 L1750.68 861.0 L1756.67 863.5 L1762.65 866.0 L1768.63 869.8 L1774.62 869.1 L1780.61 885.6 L1786.59 890.6 L1792.58 894.4 L1798.56 903.3 L1804.55 907.1 L1810.53 910.4 L1816.52 912.7 L1822.50 915.3 L1828.49 922.9 L1834.47 926.2 L1840.46 931.7 L1846.44 933.3 L1852.43 935.8 L1858.41 938.3 L1864.40 940.9 L1870.38 949.8 L1876.37 964.2 L1882.35 965.5 L1888.34 968.8 L1894.32 967.5 L1900.31 973.1 L1906.29 983.2 L1912.28 989.6 L1918.26 992.6 L1924.25 997.7 L1930.23 996.4 L1936.22 993.4 L1942.20 1001.0 L1948.19 1002.3 L1954.17 988.3 L1960.16 987.8 L1966.14 987.8 L1972.12 990.8 L1978.11 997.2 L1984.10 1003.0 L1990.08 1009.9 L1996.07 1016.7 L2002.05 1022.6 L2008.04 1009.9 L2014.02 1026.4 L2020.01 1036.0 L2025.99 1046.7 L2031.98 1070.8 L2037.96 973.6 L2043.95 967.5 L2049.93 980.2 L2055.91 983.2 L2061.90 1003.5 L2067.89 980.7 L2073.87 1011.1 L2079.86 1015.5 L2085.84 1025.6 L2091.83 1019.5 L2097.81 1023.8 L2103.80 1041.6 L2109.78 900.3 L2115.77 1041.1 L2121.75 1037.3 L2127.74 1028.9 L2133.72 883.0 L2139.70 886.8 L2145.69 893.2 L2151.68 893.9 L2157.66 885.1 L2163.64 879.2 L2169.63 897.7 L2175.62 885.6 L2181.60 890.1 L2187.59 892.7 L2193.57 893.2 L2199.56 805.2 L2205.54 817.1" fill="none" stroke="#5b84f5" stroke-width="3" stroke-linejoin="round" stroke-linecap="round"/>
</g>
<path d="M27 1188.5H2250.5V157" fill="none" stroke="#2b2e45" stroke-width="1.5"/>
<line x1="2205.5" y1="157" x2="2205.5" y2="1199" stroke="#3a3d58" stroke-width="2"/>
<line x1="2251.5" y1="157" x2="2251.5" y2="1188" stroke="#1c5a33" stroke-width="2"/>
<line x1="2342.5" y1="157" x2="2342.5" y2="1176" stroke="#5577ee" stroke-width="2.5"/>
<text x="2262.5" y="163.5" font-size="18" fill="#9da2c0">0.089</text>
<text x="2353.5" y="163.5" font-size="18" fill="#9da2c0">69.87%</text>
<text x="2262.5" y="292.5" font-size="18" fill="#9da2c0">0.078</text>
<text x="2353.5" y="292.5" font-size="18" fill="#9da2c0">69.17%</text>
<text x="2262.5" y="420.5" font-size="18" fill="#9da2c0">0.067</text>
<text x="2353.5" y="420.5" font-size="18" fill="#9da2c0">68.48%</text>
<text x="2262.5" y="549.5" font-size="18" fill="#9da2c0">0.055</text>
<text x="2353.5" y="549.5" font-size="18" fill="#9da2c0">67.78%</text>
<text x="2262.5" y="678.5" font-size="18" fill="#9da2c0">0.044</text>
<text x="2353.5" y="678.5" font-size="18" fill="#9da2c0">67.09%</text>
<text x="2262.5" y="807.5" font-size="18" fill="#9da2c0">0.033</text>
<text x="2353.5" y="807.5" font-size="18" fill="#9da2c0">66.40%</text>
<text x="2262.5" y="936.5" font-size="18" fill="#9da2c0">0.022</text>
<text x="2353.5" y="936.5" font-size="18" fill="#9da2c0">65.70%</text>
<text x="2262.5" y="1064.5" font-size="18" fill="#9da2c0">0.011</text>
<text x="2353.5" y="1064.5" font-size="18" fill="#9da2c0">65.01%</text>
<rect x="2256.5" y="327" width="57.5" height="23.5" fill="#1b6631"/>
<text x="2262.5" y="344.5" font-size="18" fill="#ffffff" stroke="#ffffff" stroke-width="0.3">0.073</text>
<rect x="2348" y="806" width="73" height="23.5" fill="#5577ee"/>
<text x="2353.5" y="824" font-size="18" fill="#ffffff">66.31%</text>
<rect x="2256.5" y="1175" width="87" height="23.5" fill="#30324b"/>
<text x="2262.5" y="1193" font-size="18" fill="#c5c9e0">0.000157</text>
<rect x="2348" y="1175" width="73" height="23.5" fill="#30324b"/>
<text x="2353.5" y="1193" font-size="18" fill="#c5c9e0">64.32%</text>
<text x="36" y="1212.5" font-size="18" fill="#9da2c0">07 Dec 21</text>
<text x="212" y="1212.5" font-size="18" fill="#9da2c0" text-anchor="middle">07 Jan 22</text>
<text x="398" y="1212.5" font-size="18" fill="#9da2c0" text-anchor="middle">07 Feb 22</text>
<text x="583" y="1212.5" font-size="18" fill="#9da2c0" text-anchor="middle">10 Mar 22</text>
<text x="769" y="1212.5" font-size="18" fill="#9da2c0" text-anchor="middle">10 Apr 22</text>
<text x="955" y="1212.5" font-size="18" fill="#9da2c0" text-anchor="middle">11 May 22</text>
<text x="1140" y="1212.5" font-size="18" fill="#9da2c0" text-anchor="middle">11 Jun 22</text>
<text x="1326" y="1212.5" font-size="18" fill="#9da2c0" text-anchor="middle">12 Jul 22</text>
<text x="1511" y="1212.5" font-size="18" fill="#9da2c0" text-anchor="middle">12 Aug 22</text>
<text x="1697" y="1212.5" font-size="18" fill="#9da2c0" text-anchor="middle">12 Sep 22</text>
<text x="1882" y="1212.5" font-size="18" fill="#9da2c0" text-anchor="middle">13 Oct 22</text>
<text x="2068" y="1212.5" font-size="18" fill="#9da2c0" text-anchor="middle">13 Nov 22</text>
<text x="2283" y="1212.5" font-size="18" fill="#9da2c0" text-anchor="end">14 Dec 22</text>
<rect x="2159" y="1198" width="93.5" height="23" fill="#30324b"/>
<text x="2205.5" y="1213.8" font-size="18" fill="#b4b8d4" text-anchor="middle">06 Dec 22</text>
<rect x="27.5" y="1244.5" width="2404" height="71" rx="5" fill="#1b1d30" stroke="#24263b" stroke-width="1.5"/>
<path d="M32.8 1258.4 L37.2 1259.4 L42.3 1267.9 L46.7 1274.7 L50.0 1267.2 L54.1 1270.6 L64.2 1268.6 L71.0 1273.0 L79.4 1270.6 L98.0 1269.6 L104.8 1263.8 L120.0 1264.5 L131.8 1253.7 L152.1 1252.7 L160.6 1257.1 L192.7 1252.7 L206.2 1258.4 L214.7 1251.0 L223.1 1259.4 L229.9 1262.8 L236.6 1261.1 L240.0 1252.7 L277.2 1253.0 L285.7 1264.5 L294.1 1285.5 L317.8 1286.5 L321.2 1289.9 L327.9 1283.1 L336.4 1286.5 L344.8 1283.1 L349.9 1300.0 L353.3 1294.3 L358.4 1302.4 L371.9 1281.4 L382.0 1278.0 L398.9 1275.3 L402.3 1277.4 L422.6 1272.0 L453.0 1269.6 L459.8 1274.7 L473.3 1276.3 L507.1 1272.0 L546.0 1267.2 L552.7 1281.4 L568.0 1288.2 L581.5 1281.4 L601.8 1276.3 L608.5 1269.6 L625.4 1262.8 L638.9 1262.8 L655.8 1261.1 L672.8 1264.5 L689.7 1263.8 L703.2 1259.4 L764.0 1257.8 L770.8 1261.8 L791.1 1258.4 L804.6 1261.8 L830.0 1261.1 L800.0 1261.1 L862.5 1261.1 L871.0 1251.7 L881.1 1251.0 L889.6 1247.6 L1016.4 1247.6 L1023.1 1252.7 L1036.6 1255.1 L1063.7 1257.1 L1084.0 1255.1 L1087.4 1258.4 L1107.6 1260.5 L1116.1 1264.5 L1122.9 1251.0 L1134.7 1254.4 L1144.8 1257.8 L1151.6 1254.4 L1175.3 1255.1 L1185.4 1250.3 L1192.2 1250.3 L1200.6 1254.4 L1246.2 1254.4 L1254.7 1251.7 L1280.1 1250.3 L1327.4 1250.3 L1340.9 1249.3 L1361.2 1250.3 L1374.7 1251.7 L1411.9 1251.0 L1418.7 1248.6 L1455.8 1250.3 L1467.7 1256.1 L1482.9 1257.8 L1526.8 1258.4 L1543.7 1260.5 L1570.8 1265.2 L1630.0 1268.6 L1625.0 1268.6 L1645.3 1267.9 L1658.8 1270.6 L1682.5 1270.6 L1692.6 1275.7 L1706.1 1278.0 L1736.6 1278.7 L1743.3 1280.7 L1758.5 1280.1 L1768.7 1274.7 L1775.4 1276.3 L1783.9 1280.4 L1800.8 1281.4 L1804.2 1278.7 L1814.3 1281.4 L1831.2 1283.1 L1836.3 1285.8 L1849.8 1284.1 L1861.6 1291.6 L1870.1 1290.9 L1881.9 1298.3 L1887.0 1294.3 L1895.5 1294.9 L1905.6 1289.9 L1935.0 1299.0 L1990.0 1303.0 L2060.0 1304.0 L2107.5 1303.0 L2107.5 1315 L32.8 1315 Z" fill="#222439"/>
<path d="M32.8 1258.4 L37.2 1259.4 L42.3 1267.9 L46.7 1274.7 L50.0 1267.2 L54.1 1270.6 L64.2 1268.6 L71.0 1273.0 L79.4 1270.6 L98.0 1269.6 L104.8 1263.8 L120.0 1264.5 L131.8 1253.7 L152.1 1252.7 L160.6 1257.1 L192.7 1252.7 L206.2 1258.4 L214.7 1251.0 L223.1 1259.4 L229.9 1262.8 L236.6 1261.1 L240.0 1252.7 L277.2 1253.0 L285.7 1264.5 L294.1 1285.5 L317.8 1286.5 L321.2 1289.9 L327.9 1283.1 L336.4 1286.5 L344.8 1283.1 L349.9 1300.0 L353.3 1294.3 L358.4 1302.4 L371.9 1281.4 L382.0 1278.0 L398.9 1275.3 L402.3 1277.4 L422.6 1272.0 L453.0 1269.6 L459.8 1274.7 L473.3 1276.3 L507.1 1272.0 L546.0 1267.2 L552.7 1281.4 L568.0 1288.2 L581.5 1281.4 L601.8 1276.3 L608.5 1269.6 L625.4 1262.8 L638.9 1262.8 L655.8 1261.1 L672.8 1264.5 L689.7 1263.8 L703.2 1259.4 L764.0 1257.8 L770.8 1261.8 L791.1 1258.4 L804.6 1261.8 L830.0 1261.1 L800.0 1261.1 L862.5 1261.1 L871.0 1251.7 L881.1 1251.0 L889.6 1247.6 L1016.4 1247.6 L1023.1 1252.7 L1036.6 1255.1 L1063.7 1257.1 L1084.0 1255.1 L1087.4 1258.4 L1107.6 1260.5 L1116.1 1264.5 L1122.9 1251.0 L1134.7 1254.4 L1144.8 1257.8 L1151.6 1254.4 L1175.3 1255.1 L1185.4 1250.3 L1192.2 1250.3 L1200.6 1254.4 L1246.2 1254.4 L1254.7 1251.7 L1280.1 1250.3 L1327.4 1250.3 L1340.9 1249.3 L1361.2 1250.3 L1374.7 1251.7 L1411.9 1251.0 L1418.7 1248.6 L1455.8 1250.3 L1467.7 1256.1 L1482.9 1257.8 L1526.8 1258.4 L1543.7 1260.5 L1570.8 1265.2 L1630.0 1268.6 L1625.0 1268.6 L1645.3 1267.9 L1658.8 1270.6 L1682.5 1270.6 L1692.6 1275.7 L1706.1 1278.0 L1736.6 1278.7 L1743.3 1280.7 L1758.5 1280.1 L1768.7 1274.7 L1775.4 1276.3 L1783.9 1280.4 L1800.8 1281.4 L1804.2 1278.7 L1814.3 1281.4 L1831.2 1283.1 L1836.3 1285.8 L1849.8 1284.1 L1861.6 1291.6 L1870.1 1290.9 L1881.9 1298.3 L1887.0 1294.3 L1895.5 1294.9 L1905.6 1289.9 L1935.0 1299.0 L1990.0 1303.0 L2060.0 1304.0 L2107.5 1303.0" fill="none" stroke="#43465f" stroke-width="2" stroke-linejoin="round"/>
<path d="M69.24 1315V1314.3H72.32V1315ZM78.48 1315V1314.3H81.56V1315ZM84.64 1315V1314.2H87.72V1315ZM90.80 1315V1314.2H93.88V1315ZM93.88 1315V1314.2H96.96V1315ZM103.12 1315V1314.3H106.20V1315ZM106.20 1315V1314.4H109.28V1315ZM124.68 1315V1314.0H127.76V1315ZM130.84 1315V1314.4H133.92V1315ZM133.92 1315V1314.1H137.00V1315ZM137.00 1315V1314.1H140.08V1315ZM140.08 1315V1314.4H143.16V1315ZM146.24 1315V1314.1H149.32V1315ZM155.48 1315V1314.5H158.56V1315ZM161.64 1315V1313.8H164.72V1315ZM164.72 1315V1313.8H167.80V1315ZM167.80 1315V1314.1H170.88V1315ZM173.96 1315V1314.5H177.04V1315ZM177.04 1315V1314.2H180.12V1315ZM183.20 1315V1314.5H186.28V1315ZM186.28 1315V1314.2H189.36V1315ZM192.44 1315V1313.9H195.52V1315ZM195.52 1315V1312.4H198.60V1315ZM198.60 1315V1312.4H201.68V1315ZM201.68 1315V1311.6H204.76V1315ZM204.76 1315V1311.6H207.84V1315ZM207.84 1315V1310.7H210.92V1315ZM210.92 1315V1309.0H214.00V1315ZM214.00 1315V1309.6H217.08V1315ZM217.08 1315V1307.1H220.16V1315ZM220.16 1315V1307.0H223.24V1315ZM223.24 1315V1306.9H226.32V1315ZM226.32 1315V1304.9H229.40V1315ZM229.40 1315V1304.8H232.48V1315ZM232.48 1315V1303.1H235.56V1315ZM235.56 1315V1303.8H238.64V1315ZM238.64 1315V1304.3H241.72V1315ZM241.72 1315V1304.3H244.80V1315ZM244.80 1315V1305.3H247.88V1315ZM247.88 1315V1304.5H250.96V1315ZM250.96 1315V1305.6H254.04V1315ZM254.04 1315V1305.8H257.12V1315ZM257.12 1315V1306.4H260.20V1315ZM260.20 1315V1306.9H263.28V1315ZM263.28 1315V1308.4H266.36V1315ZM266.36 1315V1309.4H269.44V1315ZM269.44 1315V1308.9H272.52V1315ZM272.52 1315V1308.4H275.60V1315ZM275.60 1315V1306.4H278.68V1315ZM278.68 1315V1306.8H281.76V1315ZM281.76 1315V1305.8H284.84V1315ZM284.84 1315V1305.6H287.92V1315ZM287.92 1315V1304.4H291.00V1315ZM291.00 1315V1302.4H294.08V1315ZM294.08 1315V1302.4H297.16V1315ZM297.16 1315V1303.6H300.24V1315ZM300.24 1315V1302.8H303.32V1315ZM303.32 1315V1304.3H306.40V1315ZM306.40 1315V1304.3H309.48V1315ZM309.48 1315V1304.8H312.56V1315ZM312.56 1315V1305.2H315.64V1315ZM315.64 1315V1307.2H318.72V1315ZM318.72 1315V1306.1H321.80V1315ZM321.80 1315V1306.4H324.88V1315ZM324.88 1315V1306.8H327.96V1315ZM327.96 1315V1307.9H331.04V1315ZM331.04 1315V1306.4H334.12V1315ZM334.12 1315V1307.2H337.20V1315ZM337.20 1315V1307.5H340.28V1315ZM340.28 1315V1308.3H343.36V1315ZM343.36 1315V1308.2H346.44V1315ZM346.44 1315V1308.4H349.52V1315ZM349.52 1315V1307.3H352.60V1315ZM352.60 1315V1307.7H355.68V1315ZM355.68 1315V1307.7H358.76V1315ZM358.76 1315V1308.8H361.84V1315ZM361.84 1315V1309.1H364.92V1315ZM364.92 1315V1307.6H368.00V1315ZM368.00 1315V1307.7H371.08V1315ZM371.08 1315V1307.9H374.16V1315ZM374.16 1315V1307.7H377.24V1315ZM377.24 1315V1308.1H380.32V1315ZM380.32 1315V1308.1H383.40V1315ZM383.40 1315V1307.3H386.48V1315ZM386.48 1315V1306.7H389.56V1315ZM389.56 1315V1307.3H392.64V1315ZM392.64 1315V1307.1H395.72V1315ZM395.72 1315V1307.3H398.80V1315ZM398.80 1315V1307.9H401.88V1315ZM401.88 1315V1307.3H404.96V1315ZM404.96 1315V1306.9H408.04V1315ZM408.04 1315V1307.2H411.12V1315ZM411.12 1315V1307.5H414.20V1315ZM414.20 1315V1306.4H417.28V1315ZM417.28 1315V1308.3H420.36V1315ZM420.36 1315V1308.2H423.44V1315ZM423.44 1315V1308.6H426.52V1315ZM426.52 1315V1308.6H429.60V1315ZM429.60 1315V1308.0H432.68V1315ZM432.68 1315V1308.2H435.76V1315ZM435.76 1315V1307.8H438.84V1315ZM438.84 1315V1309.3H441.92V1315ZM441.92 1315V1308.6H445.00V1315ZM445.00 1315V1309.0H448.08V1315ZM448.08 1315V1309.7H451.16V1315ZM451.16 1315V1310.0H454.24V1315ZM454.24 1315V1310.8H457.32V1315ZM457.32 1315V1310.6H460.40V1315ZM460.40 1315V1310.9H463.48V1315ZM463.48 1315V1311.6H466.56V1315ZM466.56 1315V1311.7H469.64V1315ZM469.64 1315V1312.2H472.72V1315ZM472.72 1315V1311.4H475.80V1315ZM475.80 1315V1313.1H478.88V1315ZM478.88 1315V1312.5H481.96V1315ZM481.96 1315V1311.5H485.04V1315ZM485.04 1315V1311.6H488.12V1315ZM488.12 1315V1311.8H491.20V1315ZM491.20 1315V1311.7H494.28V1315ZM494.28 1315V1311.2H497.36V1315ZM497.36 1315V1312.6H500.44V1315ZM500.44 1315V1312.8H503.52V1315ZM503.52 1315V1311.6H506.60V1315ZM506.60 1315V1311.5H509.68V1315ZM509.68 1315V1310.6H512.76V1315ZM512.76 1315V1310.6H515.84V1315ZM515.84 1315V1310.9H518.92V1315ZM518.92 1315V1310.7H522.00V1315ZM522.00 1315V1311.7H525.08V1315ZM525.08 1315V1310.2H528.16V1315ZM528.16 1315V1309.8H531.24V1315ZM531.24 1315V1311.6H534.32V1315ZM534.32 1315V1310.6H537.40V1315ZM537.40 1315V1309.8H540.48V1315ZM540.48 1315V1310.4H543.56V1315ZM543.56 1315V1309.3H546.64V1315ZM546.64 1315V1309.9H549.72V1315ZM549.72 1315V1309.0H552.80V1315ZM552.80 1315V1307.0H555.88V1315ZM555.88 1315V1304.9H558.96V1315ZM558.96 1315V1302.3H562.04V1315ZM562.04 1315V1300.0H565.12V1315ZM565.12 1315V1296.8H568.20V1315ZM568.20 1315V1295.2H571.28V1315ZM571.28 1315V1294.2H574.36V1315ZM574.36 1315V1296.4H577.44V1315ZM577.44 1315V1297.2H580.52V1315ZM580.52 1315V1298.2H583.60V1315ZM583.60 1315V1298.2H586.68V1315ZM586.68 1315V1297.4H589.76V1315ZM589.76 1315V1295.9H592.84V1315ZM592.84 1315V1294.6H595.92V1315ZM595.92 1315V1293.5H599.00V1315ZM599.00 1315V1292.1H602.08V1315ZM602.08 1315V1289.9H605.16V1315ZM605.16 1315V1290.6H608.24V1315ZM608.24 1315V1291.6H611.32V1315ZM611.32 1315V1292.3H614.40V1315ZM614.40 1315V1292.4H617.48V1315ZM617.48 1315V1288.5H620.56V1315ZM620.56 1315V1284.0H623.64V1315ZM623.64 1315V1280.5H626.72V1315ZM626.72 1315V1279.2H629.80V1315ZM629.80 1315V1276.7H632.88V1315ZM632.88 1315V1276.1H635.96V1315ZM635.96 1315V1267.9H639.04V1315ZM639.04 1315V1255.5H642.12V1315ZM642.12 1315V1247.8H645.20V1315ZM645.20 1315V1248.5H648.28V1315ZM648.28 1315V1252.1H651.36V1315ZM651.36 1315V1256.4H654.44V1315ZM654.44 1315V1260.7H657.52V1315ZM657.52 1315V1265.5H660.60V1315ZM660.60 1315V1270.0H663.68V1315ZM663.68 1315V1273.9H666.76V1315ZM666.76 1315V1276.5H669.84V1315ZM669.84 1315V1277.7H672.92V1315ZM672.92 1315V1278.9H676.00V1315ZM676.00 1315V1278.3H679.08V1315ZM679.08 1315V1279.7H682.16V1315ZM682.16 1315V1279.2H685.24V1315ZM685.24 1315V1277.9H688.32V1315ZM688.32 1315V1276.9H691.40V1315ZM691.40 1315V1277.1H694.48V1315ZM694.48 1315V1277.3H697.56V1315ZM697.56 1315V1279.3H700.64V1315ZM700.64 1315V1279.1H703.72V1315ZM703.72 1315V1280.6H706.80V1315ZM706.80 1315V1281.3H709.88V1315ZM709.88 1315V1280.6H712.96V1315ZM712.96 1315V1280.9H716.04V1315ZM716.04 1315V1282.3H719.12V1315ZM719.12 1315V1281.9H722.20V1315ZM722.20 1315V1280.8H725.28V1315ZM725.28 1315V1280.7H728.36V1315ZM728.36 1315V1280.7H731.44V1315ZM731.44 1315V1282.2H734.52V1315ZM734.52 1315V1283.0H737.60V1315ZM737.60 1315V1282.9H740.68V1315ZM740.68 1315V1285.5H743.76V1315ZM743.76 1315V1287.1H746.84V1315ZM746.84 1315V1287.6H749.92V1315ZM749.92 1315V1288.2H753.00V1315ZM753.00 1315V1289.8H756.08V1315ZM756.08 1315V1290.1H759.16V1315ZM759.16 1315V1291.0H762.24V1315ZM762.24 1315V1294.1H765.32V1315ZM765.32 1315V1294.3H768.40V1315ZM768.40 1315V1294.8H771.48V1315ZM771.48 1315V1296.4H774.56V1315ZM774.56 1315V1296.1H777.64V1315ZM777.64 1315V1297.2H780.72V1315ZM780.72 1315V1296.7H783.80V1315ZM783.80 1315V1295.1H786.88V1315ZM786.88 1315V1294.8H789.96V1315ZM789.96 1315V1294.9H793.04V1315ZM793.04 1315V1297.3H796.12V1315ZM796.12 1315V1300.6H799.20V1315ZM799.20 1315V1302.5H802.28V1315ZM802.28 1315V1301.5H805.36V1315ZM805.36 1315V1298.9H808.44V1315ZM808.44 1315V1298.4H811.52V1315ZM811.52 1315V1295.3H814.60V1315ZM814.60 1315V1293.6H817.68V1315ZM817.68 1315V1291.9H820.76V1315ZM820.76 1315V1290.6H823.84V1315ZM823.84 1315V1284.6H826.92V1315ZM826.92 1315V1279.4H830.00V1315ZM830.00 1315V1274.5H833.08V1315ZM833.08 1315V1274.0H836.16V1315ZM836.16 1315V1273.5H839.24V1315ZM839.24 1315V1271.8H842.32V1315ZM842.32 1315V1269.6H845.40V1315ZM845.40 1315V1266.0H848.48V1315ZM848.48 1315V1266.8H851.56V1315ZM851.56 1315V1270.1H854.64V1315ZM854.64 1315V1270.6H857.72V1315ZM857.72 1315V1273.0H860.80V1315ZM860.80 1315V1275.3H863.88V1315ZM863.88 1315V1276.8H866.96V1315ZM866.96 1315V1277.9H870.04V1315ZM870.04 1315V1279.1H873.12V1315ZM873.12 1315V1279.9H876.20V1315ZM876.20 1315V1281.1H879.28V1315ZM879.28 1315V1280.6H882.36V1315ZM882.36 1315V1282.9H885.44V1315ZM885.44 1315V1283.8H888.52V1315ZM888.52 1315V1285.4H891.60V1315ZM891.60 1315V1288.0H894.68V1315ZM894.68 1315V1289.0H897.76V1315ZM897.76 1315V1289.6H900.84V1315ZM900.84 1315V1289.1H903.92V1315ZM903.92 1315V1288.5H907.00V1315ZM907.00 1315V1286.6H910.08V1315ZM910.08 1315V1286.0H913.16V1315ZM913.16 1315V1284.9H916.24V1315ZM916.24 1315V1283.8H919.32V1315ZM919.32 1315V1283.1H922.40V1315ZM922.40 1315V1281.5H925.48V1315ZM925.48 1315V1280.5H928.56V1315ZM928.56 1315V1279.3H931.64V1315ZM931.64 1315V1279.5H934.72V1315ZM934.72 1315V1278.7H937.80V1315ZM937.80 1315V1278.7H940.88V1315ZM940.88 1315V1278.5H943.96V1315ZM943.96 1315V1276.9H947.04V1315ZM947.04 1315V1277.8H950.12V1315ZM950.12 1315V1278.9H953.20V1315ZM953.20 1315V1279.0H956.28V1315ZM956.28 1315V1277.9H959.36V1315ZM959.36 1315V1278.2H962.44V1315ZM962.44 1315V1279.2H965.52V1315ZM965.52 1315V1278.8H968.60V1315ZM968.60 1315V1279.5H971.68V1315ZM971.68 1315V1279.6H974.76V1315ZM974.76 1315V1281.2H977.84V1315ZM977.84 1315V1281.9H980.92V1315ZM980.92 1315V1282.6H984.00V1315ZM984.00 1315V1281.7H987.08V1315ZM987.08 1315V1283.3H990.16V1315ZM990.16 1315V1283.7H993.24V1315ZM993.24 1315V1283.2H996.32V1315ZM996.32 1315V1286.0H999.40V1315ZM999.40 1315V1288.0H1002.48V1315ZM1002.48 1315V1287.7H1005.56V1315ZM1005.56 1315V1289.5H1008.64V1315ZM1008.64 1315V1288.7H1011.72V1315ZM1011.72 1315V1289.2H1014.80V1315ZM1014.80 1315V1290.5H1017.88V1315ZM1017.88 1315V1290.5H1020.96V1315ZM1020.96 1315V1292.0H1024.04V1315ZM1024.04 1315V1295.6H1027.12V1315ZM1027.12 1315V1296.9H1030.20V1315ZM1030.20 1315V1296.8H1033.28V1315ZM1033.28 1315V1296.9H1036.36V1315ZM1036.36 1315V1298.0H1039.44V1315ZM1039.44 1315V1300.7H1042.52V1315ZM1042.52 1315V1300.6H1045.60V1315ZM1045.60 1315V1301.1H1048.68V1315ZM1048.68 1315V1300.2H1051.76V1315ZM1051.76 1315V1298.8H1054.84V1315ZM1054.84 1315V1298.8H1057.92V1315ZM1057.92 1315V1299.5H1061.00V1315ZM1061.00 1315V1299.6H1064.08V1315ZM1064.08 1315V1299.0H1067.16V1315ZM1067.16 1315V1301.1H1070.24V1315ZM1070.24 1315V1301.1H1073.32V1315ZM1073.32 1315V1301.7H1076.40V1315ZM1076.40 1315V1300.3H1079.48V1315ZM1079.48 1315V1300.9H1082.56V1315ZM1082.56 1315V1300.8H1085.64V1315ZM1085.64 1315V1302.3H1088.72V1315ZM1088.72 1315V1301.2H1091.80V1315ZM1091.80 1315V1301.0H1094.88V1315ZM1094.88 1315V1301.5H1097.96V1315ZM1097.96 1315V1302.5H1101.04V1315ZM1101.04 1315V1302.3H1104.12V1315ZM1104.12 1315V1301.4H1107.20V1315ZM1107.20 1315V1301.6H1110.28V1315ZM1110.28 1315V1303.6H1113.36V1315ZM1113.36 1315V1303.3H1116.44V1315ZM1116.44 1315V1303.9H1119.52V1315ZM1119.52 1315V1303.1H1122.60V1315ZM1122.60 1315V1303.5H1125.68V1315ZM1125.68 1315V1304.6H1128.76V1315ZM1128.76 1315V1303.8H1131.84V1315ZM1131.84 1315V1302.9H1134.92V1315ZM1134.92 1315V1304.4H1138.00V1315ZM1138.00 1315V1302.9H1141.08V1315ZM1141.08 1315V1301.7H1144.16V1315ZM1144.16 1315V1298.7H1147.24V1315ZM1147.24 1315V1299.1H1150.32V1315ZM1150.32 1315V1298.2H1153.40V1315ZM1153.40 1315V1300.4H1156.48V1315ZM1156.48 1315V1300.2H1159.56V1315ZM1159.56 1315V1300.6H1162.64V1315ZM1162.64 1315V1301.6H1165.72V1315ZM1165.72 1315V1302.6H1168.80V1315ZM1168.80 1315V1301.2H1171.88V1315ZM1171.88 1315V1301.0H1174.96V1315ZM1174.96 1315V1301.8H1178.04V1315ZM1178.04 1315V1301.2H1181.12V1315ZM1181.12 1315V1300.8H1184.20V1315ZM1184.20 1315V1300.2H1187.28V1315ZM1187.28 1315V1299.2H1190.36V1315ZM1190.36 1315V1298.8H1193.44V1315ZM1193.44 1315V1299.1H1196.52V1315ZM1196.52 1315V1299.2H1199.60V1315ZM1199.60 1315V1300.2H1202.68V1315ZM1202.68 1315V1299.3H1205.76V1315ZM1205.76 1315V1299.9H1208.84V1315ZM1208.84 1315V1299.3H1211.92V1315ZM1211.92 1315V1299.8H1215.00V1315ZM1215.00 1315V1299.2H1218.08V1315ZM1218.08 1315V1299.8H1221.16V1315ZM1221.16 1315V1299.5H1224.24V1315ZM1224.24 1315V1301.0H1227.32V1315ZM1227.32 1315V1300.8H1230.40V1315ZM1230.40 1315V1300.1H1233.48V1315ZM1233.48 1315V1300.8H1236.56V1315ZM1236.56 1315V1301.8H1239.64V1315ZM1239.64 1315V1300.5H1242.72V1315ZM1242.72 1315V1302.5H1245.80V1315ZM1245.80 1315V1302.3H1248.88V1315ZM1248.88 1315V1302.9H1251.96V1315ZM1251.96 1315V1304.1H1255.04V1315ZM1255.04 1315V1303.1H1258.12V1315ZM1258.12 1315V1303.2H1261.20V1315ZM1261.20 1315V1303.5H1264.28V1315ZM1264.28 1315V1304.0H1267.36V1315ZM1267.36 1315V1302.7H1270.44V1315ZM1270.44 1315V1303.6H1273.52V1315ZM1273.52 1315V1303.3H1276.60V1315ZM1276.60 1315V1303.0H1279.68V1315ZM1279.68 1315V1302.5H1282.76V1315ZM1282.76 1315V1302.3H1285.84V1315ZM1285.84 1315V1301.6H1288.92V1315ZM1288.92 1315V1301.7H1292.00V1315ZM1292.00 1315V1301.5H1295.08V1315ZM1295.08 1315V1303.5H1298.16V1315ZM1298.16 1315V1303.1H1301.24V1315ZM1301.24 1315V1303.5H1304.32V1315ZM1304.32 1315V1304.0H1307.40V1315ZM1307.40 1315V1305.9H1310.48V1315ZM1310.48 1315V1306.1H1313.56V1315ZM1313.56 1315V1305.8H1316.64V1315ZM1316.64 1315V1305.2H1319.72V1315ZM1319.72 1315V1305.3H1322.80V1315ZM1322.80 1315V1305.5H1325.88V1315ZM1325.88 1315V1306.0H1328.96V1315ZM1328.96 1315V1305.6H1332.04V1315ZM1332.04 1315V1306.3H1335.12V1315ZM1335.12 1315V1306.1H1338.20V1315ZM1338.20 1315V1307.6H1341.28V1315ZM1341.28 1315V1307.7H1344.36V1315ZM1344.36 1315V1306.9H1347.44V1315ZM1347.44 1315V1306.3H1350.52V1315ZM1350.52 1315V1307.7H1353.60V1315ZM1353.60 1315V1306.4H1356.68V1315ZM1356.68 1315V1306.5H1359.76V1315ZM1359.76 1315V1305.8H1362.84V1315ZM1362.84 1315V1306.5H1365.92V1315ZM1365.92 1315V1306.7H1369.00V1315ZM1369.00 1315V1306.8H1372.08V1315ZM1372.08 1315V1306.2H1375.16V1315ZM1375.16 1315V1306.7H1378.24V1315ZM1378.24 1315V1305.5H1381.32V1315ZM1381.32 1315V1305.9H1384.40V1315ZM1384.40 1315V1305.4H1387.48V1315ZM1387.48 1315V1305.9H1390.56V1315ZM1390.56 1315V1305.0H1393.64V1315ZM1393.64 1315V1304.8H1396.72V1315ZM1396.72 1315V1305.4H1399.80V1315ZM1399.80 1315V1305.4H1402.88V1315ZM1402.88 1315V1306.1H1405.96V1315ZM1405.96 1315V1306.1H1409.04V1315ZM1409.04 1315V1306.6H1412.12V1315ZM1412.12 1315V1306.5H1415.20V1315ZM1415.20 1315V1306.7H1418.28V1315ZM1418.28 1315V1307.1H1421.36V1315ZM1421.36 1315V1306.1H1424.44V1315ZM1424.44 1315V1306.1H1427.52V1315ZM1427.52 1315V1307.5H1430.60V1315ZM1430.60 1315V1305.9H1433.68V1315ZM1433.68 1315V1307.1H1436.76V1315ZM1436.76 1315V1307.0H1439.84V1315ZM1439.84 1315V1305.8H1442.92V1315ZM1442.92 1315V1307.5H1446.00V1315ZM1446.00 1315V1307.7H1449.08V1315ZM1449.08 1315V1307.3H1452.16V1315ZM1452.16 1315V1307.6H1455.24V1315ZM1455.24 1315V1307.8H1458.32V1315ZM1458.32 1315V1306.6H1461.40V1315ZM1461.40 1315V1307.4H1464.48V1315ZM1464.48 1315V1307.5H1467.56V1315ZM1467.56 1315V1308.2H1470.64V1315ZM1470.64 1315V1308.3H1473.72V1315ZM1473.72 1315V1308.4H1476.80V1315ZM1476.80 1315V1307.8H1479.88V1315ZM1479.88 1315V1308.2H1482.96V1315ZM1482.96 1315V1307.5H1486.04V1315ZM1486.04 1315V1307.3H1489.12V1315ZM1489.12 1315V1306.1H1492.20V1315ZM1492.20 1315V1305.4H1495.28V1315ZM1495.28 1315V1305.4H1498.36V1315ZM1498.36 1315V1305.6H1501.44V1315ZM1501.44 1315V1304.9H1504.52V1315ZM1504.52 1315V1306.1H1507.60V1315ZM1507.60 1315V1305.3H1510.68V1315ZM1510.68 1315V1305.3H1513.76V1315ZM1513.76 1315V1305.3H1516.84V1315ZM1516.84 1315V1305.4H1519.92V1315ZM1519.92 1315V1305.1H1523.00V1315ZM1523.00 1315V1304.1H1526.08V1315ZM1526.08 1315V1305.7H1529.16V1315ZM1529.16 1315V1305.6H1532.24V1315ZM1532.24 1315V1305.1H1535.32V1315ZM1535.32 1315V1305.2H1538.40V1315ZM1538.40 1315V1305.6H1541.48V1315ZM1541.48 1315V1304.7H1544.56V1315ZM1544.56 1315V1306.3H1547.64V1315ZM1547.64 1315V1305.6H1550.72V1315ZM1550.72 1315V1305.5H1553.80V1315ZM1553.80 1315V1306.1H1556.88V1315ZM1556.88 1315V1307.2H1559.96V1315ZM1559.96 1315V1306.0H1563.04V1315ZM1563.04 1315V1306.9H1566.12V1315ZM1566.12 1315V1307.2H1569.20V1315ZM1569.20 1315V1306.1H1572.28V1315ZM1572.28 1315V1305.7H1575.36V1315ZM1575.36 1315V1305.8H1578.44V1315ZM1578.44 1315V1306.1H1581.52V1315ZM1581.52 1315V1306.2H1584.60V1315ZM1584.60 1315V1305.9H1587.68V1315ZM1587.68 1315V1305.9H1590.76V1315ZM1590.76 1315V1304.7H1593.84V1315ZM1593.84 1315V1304.8H1596.92V1315ZM1596.92 1315V1305.0H1600.00V1315ZM1600.00 1315V1305.9H1603.08V1315ZM1603.08 1315V1305.0H1606.16V1315ZM1606.16 1315V1305.5H1609.24V1315ZM1609.24 1315V1304.4H1612.32V1315ZM1612.32 1315V1304.4H1615.40V1315ZM1615.40 1315V1304.8H1618.48V1315ZM1618.48 1315V1305.6H1621.56V1315ZM1621.56 1315V1305.6H1624.64V1315ZM1624.64 1315V1305.5H1627.72V1315ZM1627.72 1315V1304.7H1630.80V1315ZM1630.80 1315V1304.5H1633.88V1315ZM1633.88 1315V1304.2H1636.96V1315ZM1636.96 1315V1303.9H1640.04V1315ZM1640.04 1315V1303.0H1643.12V1315ZM1643.12 1315V1304.3H1646.20V1315ZM1646.20 1315V1302.7H1649.28V1315ZM1649.28 1315V1304.0H1652.36V1315ZM1652.36 1315V1303.6H1655.44V1315ZM1655.44 1315V1301.6H1658.52V1315ZM1658.52 1315V1302.2H1661.60V1315ZM1661.60 1315V1302.5H1664.68V1315ZM1664.68 1315V1302.5H1667.76V1315ZM1667.76 1315V1301.1H1670.84V1315ZM1670.84 1315V1300.4H1673.92V1315ZM1673.92 1315V1299.9H1677.00V1315ZM1677.00 1315V1301.1H1680.08V1315ZM1680.08 1315V1299.3H1683.16V1315ZM1683.16 1315V1299.7H1686.24V1315ZM1686.24 1315V1298.4H1689.32V1315ZM1689.32 1315V1299.1H1692.40V1315ZM1692.40 1315V1300.2H1695.48V1315ZM1695.48 1315V1298.7H1698.56V1315ZM1698.56 1315V1300.2H1701.64V1315ZM1701.64 1315V1299.8H1704.72V1315ZM1704.72 1315V1300.7H1707.80V1315ZM1707.80 1315V1300.5H1710.88V1315ZM1710.88 1315V1299.7H1713.96V1315ZM1713.96 1315V1301.2H1717.04V1315ZM1717.04 1315V1300.6H1720.12V1315ZM1720.12 1315V1299.8H1723.20V1315ZM1723.20 1315V1299.9H1726.28V1315ZM1726.28 1315V1301.0H1729.36V1315ZM1729.36 1315V1301.0H1732.44V1315ZM1732.44 1315V1300.8H1735.52V1315ZM1735.52 1315V1300.5H1738.60V1315ZM1738.60 1315V1301.0H1741.68V1315ZM1741.68 1315V1301.0H1744.76V1315ZM1744.76 1315V1302.1H1747.84V1315ZM1747.84 1315V1300.5H1750.92V1315ZM1750.92 1315V1302.0H1754.00V1315ZM1754.00 1315V1302.3H1757.08V1315ZM1757.08 1315V1300.9H1760.16V1315ZM1760.16 1315V1302.6H1763.24V1315ZM1763.24 1315V1302.2H1766.32V1315ZM1766.32 1315V1302.6H1769.40V1315ZM1769.40 1315V1301.5H1772.48V1315ZM1772.48 1315V1301.7H1775.56V1315ZM1775.56 1315V1301.8H1778.64V1315ZM1778.64 1315V1303.0H1781.72V1315ZM1781.72 1315V1302.3H1784.80V1315ZM1784.80 1315V1301.9H1787.88V1315ZM1787.88 1315V1302.0H1790.96V1315ZM1790.96 1315V1301.8H1794.04V1315ZM1794.04 1315V1301.4H1797.12V1315ZM1797.12 1315V1301.5H1800.20V1315ZM1800.20 1315V1302.8H1803.28V1315ZM1803.28 1315V1300.8H1806.36V1315ZM1806.36 1315V1301.3H1809.44V1315ZM1809.44 1315V1299.0H1812.52V1315ZM1812.52 1315V1298.2H1815.60V1315ZM1815.60 1315V1297.8H1818.68V1315ZM1818.68 1315V1296.8H1821.76V1315ZM1821.76 1315V1297.0H1824.84V1315ZM1824.84 1315V1297.9H1827.92V1315ZM1827.92 1315V1297.5H1831.00V1315ZM1831.00 1315V1297.5H1834.08V1315ZM1834.08 1315V1297.8H1837.16V1315ZM1837.16 1315V1299.1H1840.24V1315ZM1840.24 1315V1299.8H1843.32V1315ZM1843.32 1315V1299.7H1846.40V1315ZM1846.40 1315V1300.7H1849.48V1315ZM1849.48 1315V1300.0H1852.56V1315ZM1852.56 1315V1302.0H1855.64V1315ZM1855.64 1315V1301.3H1858.72V1315ZM1858.72 1315V1301.5H1861.80V1315ZM1861.80 1315V1300.9H1864.88V1315ZM1864.88 1315V1299.8H1867.96V1315ZM1867.96 1315V1299.0H1871.04V1315ZM1871.04 1315V1300.3H1874.12V1315ZM1874.12 1315V1298.4H1877.20V1315ZM1877.20 1315V1298.7H1880.28V1315ZM1880.28 1315V1298.0H1883.36V1315ZM1883.36 1315V1297.0H1886.44V1315ZM1886.44 1315V1297.0H1889.52V1315ZM1889.52 1315V1296.5H1892.60V1315ZM1892.60 1315V1294.2H1895.68V1315ZM1895.68 1315V1294.4H1898.76V1315ZM1898.76 1315V1293.4H1901.84V1315ZM1901.84 1315V1293.6H1904.92V1315ZM1904.92 1315V1292.0H1908.00V1315ZM1908.00 1315V1287.7H1911.08V1315ZM1911.08 1315V1283.9H1914.16V1315ZM1914.16 1315V1280.2H1917.24V1315ZM1917.24 1315V1282.1H1920.32V1315ZM1920.32 1315V1281.8H1923.40V1315ZM1923.40 1315V1281.8H1926.48V1315ZM1926.48 1315V1283.7H1929.56V1315ZM1929.56 1315V1284.0H1932.64V1315ZM1932.64 1315V1282.7H1935.72V1315ZM1935.72 1315V1281.9H1938.80V1315ZM1938.80 1315V1282.2H1941.88V1315ZM1941.88 1315V1283.3H1944.96V1315ZM1944.96 1315V1285.1H1948.04V1315ZM1948.04 1315V1285.9H1951.12V1315ZM1951.12 1315V1287.5H1954.20V1315ZM1954.20 1315V1287.1H1957.28V1315ZM1957.28 1315V1287.1H1960.36V1315ZM1960.36 1315V1287.2H1963.44V1315ZM1963.44 1315V1286.3H1966.52V1315ZM1966.52 1315V1285.6H1969.60V1315ZM1969.60 1315V1286.1H1972.68V1315ZM1972.68 1315V1286.8H1975.76V1315ZM1975.76 1315V1287.0H1978.84V1315ZM1978.84 1315V1287.4H1981.92V1315ZM1981.92 1315V1287.3H1985.00V1315ZM1985.00 1315V1286.8H1988.08V1315ZM1988.08 1315V1287.2H1991.16V1315ZM1991.16 1315V1284.6H1994.24V1315ZM1994.24 1315V1284.5H1997.32V1315ZM1997.32 1315V1284.0H2000.40V1315ZM2000.40 1315V1283.8H2003.48V1315ZM2003.48 1315V1281.9H2006.56V1315ZM2006.56 1315V1281.4H2009.64V1315ZM2009.64 1315V1280.8H2012.72V1315ZM2012.72 1315V1280.6H2015.80V1315ZM2015.80 1315V1281.1H2018.88V1315ZM2018.88 1315V1282.6H2021.96V1315ZM2021.96 1315V1282.8H2025.04V1315ZM2025.04 1315V1283.3H2028.12V1315ZM2028.12 1315V1282.0H2031.20V1315ZM2031.20 1315V1282.4H2034.28V1315ZM2034.28 1315V1284.2H2037.36V1315ZM2037.36 1315V1284.9H2040.44V1315ZM2040.44 1315V1284.5H2043.52V1315ZM2043.52 1315V1285.1H2046.60V1315ZM2046.60 1315V1284.3H2049.68V1315ZM2049.68 1315V1285.5H2052.76V1315ZM2052.76 1315V1286.9H2055.84V1315ZM2055.84 1315V1287.1H2058.92V1315ZM2058.92 1315V1286.7H2062.00V1315ZM2062.00 1315V1286.3H2065.08V1315ZM2065.08 1315V1284.2H2068.16V1315ZM2068.16 1315V1283.3H2071.24V1315ZM2071.24 1315V1282.8H2074.32V1315ZM2074.32 1315V1282.9H2077.40V1315ZM2077.40 1315V1282.8H2080.48V1315ZM2080.48 1315V1282.8H2083.56V1315ZM2083.56 1315V1281.8H2086.64V1315ZM2086.64 1315V1281.1H2089.72V1315ZM2089.72 1315V1280.9H2092.80V1315ZM2092.80 1315V1279.7H2095.88V1315ZM2095.88 1315V1279.0H2098.96V1315ZM2098.96 1315V1276.9H2102.04V1315ZM2102.04 1315V1277.4H2105.12V1315ZM2105.12 1315V1275.8H2108.20V1315Z" fill="#3b3e58" stroke="#2c2f46" stroke-width="0.7"/>
<rect x="2107.5" y="1245" width="322.5" height="70.5" fill="#2a2c42"/>
<path d="M2107.50 1315V1273.5H2110.57V1315ZM2110.57 1315V1273.9H2113.64V1315ZM2113.64 1315V1274.1H2116.71V1315ZM2116.71 1315V1273.6H2119.79V1315ZM2119.79 1315V1274.2H2122.86V1315ZM2122.86 1315V1274.8H2125.93V1315ZM2125.93 1315V1275.4H2129.00V1315ZM2129.00 1315V1275.9H2132.07V1315ZM2132.07 1315V1276.9H2135.14V1315ZM2135.14 1315V1278.2H2138.21V1315ZM2138.21 1315V1276.9H2141.29V1315ZM2141.29 1315V1277.2H2144.36V1315ZM2144.36 1315V1278.8H2147.43V1315ZM2147.43 1315V1281.2H2150.50V1315ZM2150.50 1315V1282.1H2153.57V1315ZM2153.57 1315V1281.0H2156.64V1315ZM2156.64 1315V1279.3H2159.71V1315ZM2159.71 1315V1279.3H2162.79V1315ZM2162.79 1315V1280.0H2165.86V1315ZM2165.86 1315V1281.0H2168.93V1315ZM2168.93 1315V1279.8H2172.00V1315ZM2172.00 1315V1280.9H2175.07V1315ZM2175.07 1315V1281.0H2178.14V1315ZM2178.14 1315V1280.6H2181.21V1315ZM2181.21 1315V1281.9H2184.29V1315ZM2184.29 1315V1282.0H2187.36V1315ZM2187.36 1315V1282.4H2190.43V1315ZM2190.43 1315V1282.4H2193.50V1315ZM2193.50 1315V1281.6H2196.57V1315ZM2196.57 1315V1280.4H2199.64V1315ZM2199.64 1315V1280.1H2202.71V1315ZM2202.71 1315V1280.2H2205.79V1315ZM2205.79 1315V1279.6H2208.86V1315ZM2208.86 1315V1277.9H2211.93V1315ZM2211.93 1315V1278.1H2215.00V1315ZM2215.00 1315V1277.5H2218.07V1315ZM2218.07 1315V1277.6H2221.14V1315ZM2221.14 1315V1277.8H2224.21V1315ZM2224.21 1315V1278.2H2227.29V1315ZM2227.29 1315V1278.2H2230.36V1315ZM2230.36 1315V1278.5H2233.43V1315ZM2233.43 1315V1278.9H2236.50V1315ZM2236.50 1315V1278.3H2239.57V1315ZM2239.57 1315V1278.3H2242.64V1315ZM2242.64 1315V1279.3H2245.71V1315ZM2245.71 1315V1281.1H2248.79V1315ZM2248.79 1315V1281.5H2251.86V1315ZM2251.86 1315V1281.8H2254.93V1315ZM2254.93 1315V1282.0H2258.00V1315ZM2258.00 1315V1284.7H2261.07V1315ZM2261.07 1315V1284.5H2264.14V1315ZM2264.14 1315V1285.3H2267.21V1315ZM2267.21 1315V1285.9H2270.29V1315ZM2270.29 1315V1287.3H2273.36V1315ZM2273.36 1315V1288.2H2276.43V1315ZM2276.43 1315V1288.7H2279.50V1315ZM2279.50 1315V1288.4H2282.57V1315ZM2282.57 1315V1287.0H2285.64V1315ZM2285.64 1315V1287.2H2288.71V1315ZM2288.71 1315V1287.8H2291.79V1315ZM2291.79 1315V1286.9H2294.86V1315ZM2294.86 1315V1287.0H2297.93V1315ZM2297.93 1315V1287.9H2301.00V1315ZM2301.00 1315V1285.2H2304.07V1315ZM2304.07 1315V1282.1H2307.14V1315ZM2307.14 1315V1281.3H2310.21V1315ZM2310.21 1315V1280.7H2313.29V1315ZM2313.29 1315V1279.3H2316.36V1315ZM2316.36 1315V1279.9H2319.43V1315ZM2319.43 1315V1278.9H2322.50V1315ZM2322.50 1315V1278.1H2325.57V1315ZM2325.57 1315V1275.5H2328.64V1315ZM2328.64 1315V1276.0H2331.71V1315ZM2331.71 1315V1276.9H2334.79V1315ZM2334.79 1315V1277.2H2337.86V1315ZM2337.86 1315V1277.6H2340.93V1315ZM2340.93 1315V1277.7H2344.00V1315ZM2344.00 1315V1276.2H2347.07V1315ZM2347.07 1315V1274.9H2350.14V1315ZM2350.14 1315V1274.0H2353.21V1315ZM2353.21 1315V1276.2H2356.29V1315ZM2356.29 1315V1277.8H2359.36V1315ZM2359.36 1315V1280.5H2362.43V1315ZM2362.43 1315V1281.1H2365.50V1315ZM2365.50 1315V1280.8H2368.57V1315ZM2368.57 1315V1281.2H2371.64V1315ZM2371.64 1315V1281.8H2374.71V1315ZM2374.71 1315V1281.6H2377.79V1315ZM2377.79 1315V1281.6H2380.86V1315ZM2380.86 1315V1281.8H2383.93V1315ZM2383.93 1315V1281.5H2387.00V1315ZM2387.00 1315V1281.7H2390.07V1315ZM2390.07 1315V1280.4H2393.14V1315ZM2393.14 1315V1277.8H2396.21V1315ZM2396.21 1315V1276.8H2399.29V1315ZM2399.29 1315V1277.3H2402.36V1315ZM2402.36 1315V1277.9H2405.43V1315ZM2405.43 1315V1279.0H2408.50V1315ZM2408.50 1315V1278.1H2411.57V1315ZM2411.57 1315V1279.2H2414.64V1315ZM2414.64 1315V1280.0H2417.71V1315ZM2417.71 1315V1279.4H2420.79V1315ZM2420.79 1315V1278.9H2423.86V1315ZM2423.86 1315V1277.7H2426.93V1315ZM2426.93 1315V1278.3H2430.00V1315Z" fill="#1b6131" stroke="#124a28" stroke-width="0.7"/>
<path d="M2107.5 1303.0 L2110.2 1302.9 L2112.8 1302.9 L2115.5 1303.1 L2118.1 1305.4 L2120.8 1305.5 L2123.4 1305.7 L2126.1 1303.7 L2128.8 1303.8 L2131.4 1304.3 L2134.1 1304.7 L2136.7 1304.9 L2139.4 1305.1 L2142.1 1305.1 L2144.7 1305.6 L2147.4 1306.1 L2150.0 1306.3 L2152.7 1306.3 L2155.3 1305.8 L2158.0 1306.0 L2160.7 1305.9 L2163.3 1303.4 L2166.0 1305.4 L2168.6 1302.8 L2171.3 1305.4 L2173.9 1303.1 L2176.6 1305.2 L2179.3 1305.3 L2181.9 1305.4 L2184.6 1305.8 L2187.2 1306.0 L2189.9 1306.1 L2192.6 1306.2 L2195.2 1306.3 L2197.9 1306.4 L2200.5 1305.6 L2203.2 1305.8 L2205.8 1305.7 L2208.5 1305.6 L2211.2 1305.7 L2213.8 1306.4 L2216.5 1306.6 L2219.1 1306.7 L2221.8 1307.1 L2224.5 1304.8 L2227.1 1305.0 L2229.8 1305.2 L2232.4 1305.1 L2235.1 1305.4 L2237.7 1305.7 L2240.4 1306.2 L2243.1 1306.2 L2245.7 1306.2 L2248.4 1306.1 L2251.0 1306.1 L2253.7 1306.1 L2256.3 1306.3 L2259.0 1306.3 L2261.7 1306.2 L2264.3 1306.5 L2267.0 1306.7 L2269.6 1306.5 L2272.3 1306.5 L2275.0 1308.3 L2277.6 1307.7 L2280.3 1307.6 L2282.9 1307.6 L2285.6 1307.8 L2288.2 1308.2 L2290.9 1308.3 L2293.6 1308.1 L2296.2 1308.3 L2298.9 1308.7 L2301.5 1308.7 L2304.2 1308.3 L2306.8 1308.3 L2309.5 1308.2 L2312.2 1307.7 L2314.8 1310.6 L2317.5 1310.5 L2320.1 1310.0 L2322.8 1307.4 L2325.5 1307.1 L2328.1 1307.1 L2330.8 1307.3 L2333.4 1307.5 L2336.1 1307.5 L2338.7 1307.7 L2341.4 1307.2 L2344.1 1307.2 L2346.7 1307.3 L2349.4 1305.1 L2352.0 1305.0 L2354.7 1307.8 L2357.3 1310.6 L2360.0 1310.8 L2362.7 1310.9 L2365.3 1311.0 L2368.0 1311.3 L2370.6 1311.6 L2373.3 1311.7 L2376.0 1311.9 L2378.6 1312.0 L2381.3 1312.4 L2383.9 1312.4 L2386.6 1312.7 L2389.2 1312.8 L2391.9 1312.9 L2394.6 1312.7 L2397.2 1312.9 L2399.9 1313.2 L2402.5 1313.4 L2405.2 1312.5 L2407.9 1312.6 L2410.5 1313.0 L2413.2 1313.1 L2415.8 1311.5 L2418.5 1313.3 L2421.1 1311.4 L2423.8 1311.2 L2426.5 1311.3 L2429.1 1310.1 L2430.0 1310.3" fill="none" stroke="#4f8ae0" stroke-width="2.5" stroke-linejoin="round"/>
<rect x="2104" y="1267" width="8" height="27.5" rx="1.5" fill="#b9bdd8"/>
<rect x="2425" y="1267" width="8" height="27.5" rx="1.5" fill="#b9bdd8"/>
<rect x="345.5" y="26.5" width="471" height="57.5" rx="8" fill="#1a1c2e" stroke="#22243a" stroke-width="1.5"/>
<rect x="27" y="26.5" width="302.5" height="57.5" rx="8" fill="#1a232e" stroke="#1c342f" stroke-width="1.5"/>
<path d="M35 26.5H34a7.5 7.5 0 0 0 -7.5 7.5V76.5a7.5 7.5 0 0 0 7.5 7.5H35Z" fill="#1b6631"/>
<text x="45.5" y="63" font-size="24" fill="#ffffff" textLength="176" lengthAdjust="spacingAndGlyphs" stroke="#ffffff" stroke-width="0.45">Price BTC (ETH)</text>
<circle cx="258" cy="46.3" r="2" fill="#8b90b3"/>
<circle cx="258" cy="55" r="2" fill="#8b90b3"/>
<circle cx="258" cy="63.6" r="2" fill="#8b90b3"/>
<circle cx="745" cy="46.3" r="2" fill="#8b90b3"/>
<circle cx="745" cy="55" r="2" fill="#8b90b3"/>
<circle cx="745" cy="63.6" r="2" fill="#8b90b3"/>
<path d="M294.2 48.6l12 12m0 -12l-12 12" stroke="#8b90b3" stroke-width="2" fill="none"/>
<path d="M781.7 48.6l12 12m0 -12l-12 12" stroke="#8b90b3" stroke-width="2" fill="none"/>
<path d="M353.5 26.5H352.5a7.5 7.5 0 0 0 -7.5 7.5V76.5a7.5 7.5 0 0 0 7.5 7.5H353.5Z" fill="#5275ff"/>
<text x="363" y="63" font-size="24" fill="#ffffff" textLength="345" lengthAdjust="spacingAndGlyphs" stroke="#ffffff" stroke-width="0.45">[100 - 1,000,000) coins % (ETH)</text>
<circle cx="327.4" cy="29.1" r="14.8" fill="#f6f6f8"/>
<path d="M327.79999999999995 17.1L320.99999999999994 29.3L327.79999999999995 33.300000000000004Z" fill="#4a4a4a"/>
<path d="M327.79999999999995 17.1L334.59999999999997 29.3L327.79999999999995 33.300000000000004Z" fill="#1c1c1c"/>
<path d="M320.99999999999994 29.3L327.79999999999995 25.900000000000002L334.59999999999997 29.3L327.79999999999995 33.300000000000004Z" fill="#141414"/>
<path d="M320.99999999999994 31.3L327.79999999999995 35.4L327.79999999999995 39.900000000000006Z" fill="#7a7a7a"/>
<path d="M334.59999999999997 31.3L327.79999999999995 35.4L327.79999999999995 39.900000000000006Z" fill="#1c1c1c"/>
<circle cx="32" cy="30.7" r="14.6" fill="#5d628a"/>
<rect x="25.1" y="29.5" width="13.8" height="8.6" rx="1.2" fill="#ffffff"/>
<path d="M29.7 29.7V27.099999999999998a2.3 2.3 0 0 1 4.6 0V29.7" fill="none" stroke="#ffffff" stroke-width="2.4"/>
<circle cx="351.4" cy="30.7" r="14.6" fill="#5d628a"/>
<rect x="344.5" y="29.5" width="13.8" height="8.6" rx="1.2" fill="#ffffff"/>
<path d="M349.09999999999997 29.7V27.099999999999998a2.3 2.3 0 0 1 4.6 0V29.7" fill="none" stroke="#ffffff" stroke-width="2.4"/>
<circle cx="815" cy="29.1" r="14.8" fill="#f6f6f8"/>
<path d="M815.4 17.1L808.6 29.3L815.4 33.300000000000004Z" fill="#4a4a4a"/>
<path d="M815.4 17.1L822.1999999999999 29.3L815.4 33.300000000000004Z" fill="#1c1c1c"/>
<path d="M808.6 29.3L815.4 25.900000000000002L822.1999999999999 29.3L815.4 33.300000000000004Z" fill="#141414"/>
<path d="M808.6 31.3L815.4 35.4L815.4 39.900000000000006Z" fill="#7a7a7a"/>
<path d="M822.1999999999999 31.3L815.4 35.4L815.4 39.900000000000006Z" fill="#1c1c1c"/>
<rect x="2376.5" y="26.5" width="60" height="60" rx="8" fill="#1e1f34"/>
<circle cx="2404.5" cy="55" r="13.5" fill="#174a30"/>
<circle cx="2404.5" cy="55" r="7.5" fill="#8186b0"/>
<text x="26.5" y="125.4" font-size="21" fill="#8285a4" textLength="101" lengthAdjust="spacingAndGlyphs" stroke="#8285a4" stroke-width="0.3">Style: Bars</text>
<path d="M144.8 115.6l6 6 6 -6" fill="none" stroke="#8285a4" stroke-width="2"/>
<line x1="26.5" y1="138" x2="157.7" y2="138" stroke="#363952" stroke-width="1.5" stroke-dasharray="5 3"/>
<rect x="186.4" y="109" width="18" height="18.5" rx="4" fill="#1b6b2e"/>
<path d="M220.6 115.6l6 6 6 -6" fill="none" stroke="#8285a4" stroke-width="2"/>
<line x1="186.4" y1="138" x2="234.8" y2="138" stroke="#363952" stroke-width="1.5" stroke-dasharray="5 3"/>
<rect x="264.4" y="108.5" width="27.2" height="19.2" rx="1.5" fill="none" stroke="#8285a4" stroke-width="2"/>
<path d="M270.6 108.5v11M277.6 108.5v6.5M285 108.5v11" stroke="#8285a4" stroke-width="2" fill="none"/>
<text x="308" y="125.4" font-size="21" fill="#8285a4" textLength="102" lengthAdjust="spacingAndGlyphs" stroke="#8285a4" stroke-width="0.3">Interval: 1d</text>
<path d="M426.8 115.6l6 6 6 -6" fill="none" stroke="#8285a4" stroke-width="2"/>
<line x1="263.4" y1="138" x2="440.5" y2="138" stroke="#363952" stroke-width="1.5" stroke-dasharray="5 3"/>
<text x="469" y="125.4" font-size="21" fill="#8285a4" textLength="99.5" lengthAdjust="spacingAndGlyphs" stroke="#8285a4" stroke-width="0.3">Indicators:</text>
<path d="M585.2 115.6l6 6 6 -6" fill="none" stroke="#8285a4" stroke-width="2"/>
<line x1="469" y1="138" x2="598" y2="138" stroke="#363952" stroke-width="1.5" stroke-dasharray="5 3"/>
<text x="628.5" y="125.4" font-size="21" fill="#8285a4" textLength="96" lengthAdjust="spacingAndGlyphs" stroke="#8285a4" stroke-width="0.3">Show axis</text>
<rect x="740.3" y="103.2" width="29" height="29.4" rx="4" fill="#26c99a"/>
<path d="M748 118l5 5 9 -9.5" fill="none" stroke="#ffffff" stroke-width="3.4"/>
<line x1="632" y1="138" x2="769" y2="138" stroke="#363952" stroke-width="1.5" stroke-dasharray="5 3"/>
<text x="799" y="125.4" font-size="21" fill="#8285a4" textLength="73" lengthAdjust="spacingAndGlyphs" stroke="#8285a4" stroke-width="0.3">Pin axis</text>
<rect x="888" y="103.8" width="27.5" height="28.2" rx="4" fill="none" stroke="#232539" stroke-width="1.5"/>
<line x1="802" y1="138" x2="914" y2="138" stroke="#363952" stroke-width="1.5" stroke-dasharray="5 3"/>
<text x="945.5" y="125.4" font-size="21" fill="#8285a4" textLength="238" lengthAdjust="spacingAndGlyphs" stroke="#8285a4" stroke-width="0.3">Axis max/min: Auto/Auto</text>
<path d="M1199.2 115.6l6 6 6 -6" fill="none" stroke="#8285a4" stroke-width="2"/>
<line x1="945.5" y1="138" x2="1212.7" y2="138" stroke="#363952" stroke-width="1.5" stroke-dasharray="5 3"/>
<path d="M1242.5 118h14M1249.5 111v14" stroke="#8285a4" stroke-width="1.8" fill="none"/>
<text x="1271.5" y="125.4" font-size="21" fill="#8285a4" textLength="164" lengthAdjust="spacingAndGlyphs" stroke="#8285a4" stroke-width="0.3">Combine metrics</text>
<line x1="1245" y1="138" x2="1434" y2="138" stroke="#363952" stroke-width="1.5" stroke-dasharray="5 3"/>
<rect x="27" y="157" width="464" height="154" fill="#1d1f34" fill-opacity="0.90"/>
<rect x="27" y="157" width="464" height="51.5" fill="#24263c" fill-opacity="0.97"/>
<rect x="27" y="157" width="464" height="154" fill="none" stroke="#2c2e46" stroke-width="1.5"/>
<text x="48" y="189" font-size="22" fill="#9498bb">16:00, December 06, 2022</text>
<line x1="46.7" y1="243.3" x2="62" y2="243.3" stroke="#1b6631" stroke-width="3"/>
<line x1="46.7" y1="274.4" x2="62" y2="274.4" stroke="#5b84f5" stroke-width="3"/>
<text x="75.8" y="249.4" font-size="22" fill="#ffffff" stroke="#ffffff" stroke-width="0.35">BTC 0.073188</text>
<text x="224" y="249.4" font-size="22" fill="#9fa3c2">Price BTC (ETH)</text>
<text x="75.8" y="281.4" font-size="22" fill="#ffffff" stroke="#ffffff" stroke-width="0.35">66.31%</text>
<text x="157" y="281.4" font-size="22" fill="#9fa3c2">[100 - 1,000,000) coins % (ETH)</text>
</svg></body></html>
